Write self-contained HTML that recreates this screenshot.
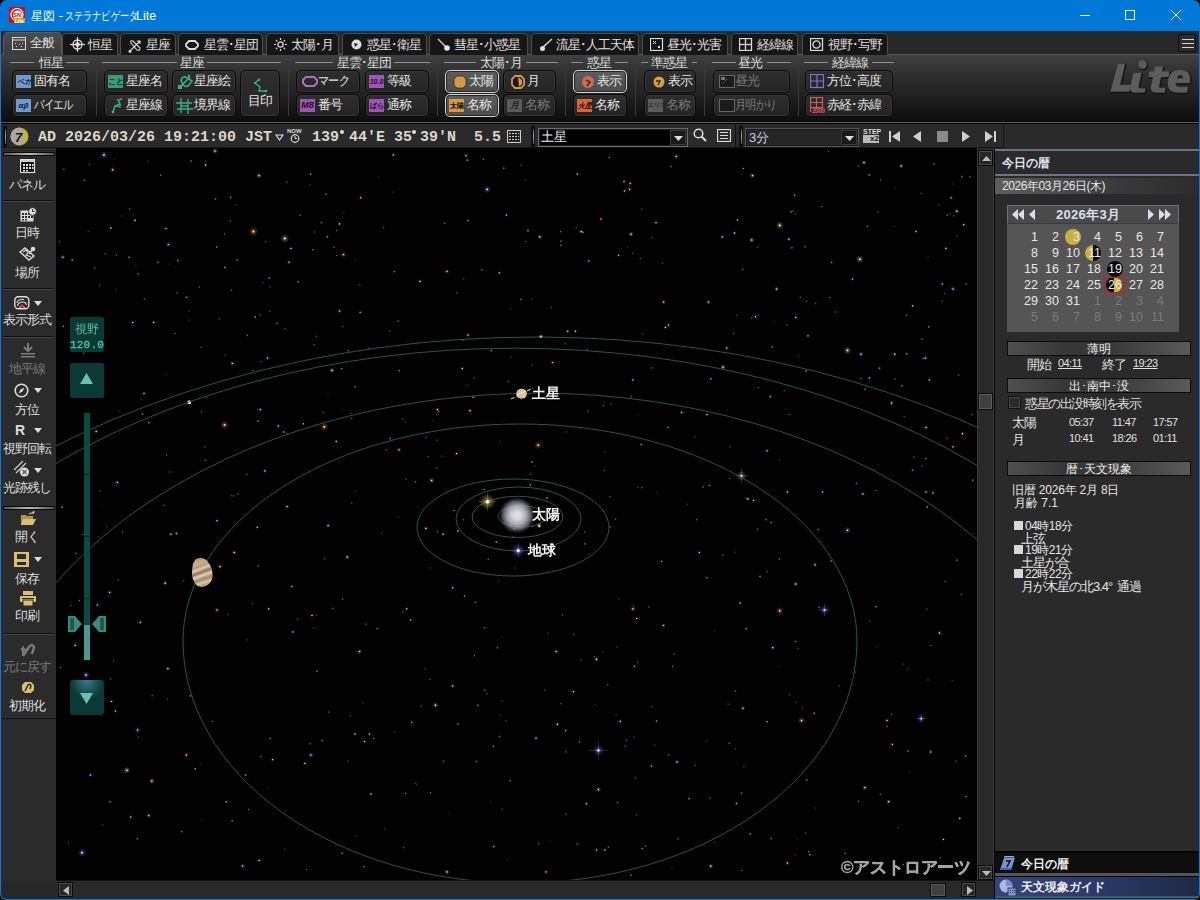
<!DOCTYPE html>
<html><head><meta charset="utf-8">
<style>
*{box-sizing:border-box;margin:0;padding:0}
html,body{width:1200px;height:900px;overflow:hidden;background:#000}
body{position:relative;font-family:"Liberation Sans",sans-serif;color:#ddd;font-size:13px}
.a{position:absolute}
#title{left:0;top:0;width:1200px;height:31px;background:#0078d7;border-radius:7px 7px 0 0}
#frame{left:0;top:31px;width:1200px;height:869px;background:#282828;border:1px solid #0c7ad6;border-top:none;border-radius:0 0 6px 6px}
.tab{top:33px;height:22px;background:#161616;border:1px solid #4c4c4c;border-bottom:none;border-radius:5px 5px 0 0;color:#e0e0e0;font-size:13px;line-height:12px;letter-spacing:-1px;white-space:nowrap}
.tab span{top:5px!important}
.tab.on span{top:4px!important}
.tab.on{top:32px;height:23px;background:linear-gradient(#4c4c4c,#3c3c3c);border-color:#5c5c5c}
#ribbon{left:1px;top:54px;width:1198px;height:69px;background:linear-gradient(#404040,#2e2e2e 30%,#1e1e1e 65%,#0c0c0c);border-top:1px solid #5a5a5a}
.glab{top:57px;height:12px;font-size:13px;line-height:12px;letter-spacing:-1px;color:#dcdcdc;text-align:center;white-space:nowrap}
.gl{height:1px;background:#8b9097;top:62px}
.vsep{top:70px;width:1px;height:46px;background:#0c0c0c;border-right:1px solid #3a3a3a}
.btn{height:23px;border:1px solid #0a0a0a;border-radius:5px;background:linear-gradient(#2e2e2e,#242424);box-shadow:inset 0 0 0 1px #343434;color:#e4e4e4;font-size:13px;line-height:12px;letter-spacing:-1px;white-space:nowrap}
.btn>span{top:4px!important}
.btn.on{border:1px solid #d4d4d4;background:linear-gradient(#5e5e5e,#4c4c4c);box-shadow:inset 0 0 0 1px #262626}
.btn.dis{color:#7a7a7a}
.ic{position:absolute;top:4px}
#status{left:1px;top:123px;width:1198px;height:25px;background:#2a2a2a;border-top:1px solid #050505}
#side{left:1px;top:148px;width:55px;height:733px;background:#2b2b2b}
#sky{left:56px;top:148px;width:921px;height:732px;background:#030303;overflow:hidden}
#vscroll{left:977px;top:148px;width:18px;height:732px;background:#2a2a2a;border-left:1px solid #111}
#hscroll{left:56px;top:880px;width:939px;height:18px;background:#2a2a2a;border-top:1px solid #111}
#rpanel{left:995px;top:148px;width:204px;height:751px;background:#2a2a2a}
.mono{font-family:"Liberation Mono",monospace}
</style></head><body>
<div id="title" class="a"></div>
<svg class="a" style="left:9px;top:7px" width="16" height="16"><rect width="16" height="16" fill="#d40c0c"/><circle cx="8" cy="7.5" r="6" fill="none" stroke="#fff" stroke-width="1.2"/><circle cx="8.5" cy="8" r="4.5" fill="#fff"/><text x="4.3" y="10" font-size="5.5" font-weight="bold" fill="#a01010" font-family="Liberation Sans">SN</text><rect x="5" y="11" width="11" height="5" fill="#e8962a"/><text x="6" y="15.6" font-size="5" font-weight="bold" fill="#fff" font-family="Liberation Sans">Lite</text></svg>
<div class="a" style="left:31px;top:10px;font-size:12px;line-height:12px;color:#fff;white-space:nowrap">星図</div><div class="a" style="left:59px;top:16px;width:4px;height:1px;background:#fff"></div><div class="a" style="left:65px;top:10px;font-size:12px;line-height:12px;color:#fff;white-space:nowrap;transform:scaleX(0.76);transform-origin:0 0">ステラナビゲータ</div><div class="a" style="left:136px;top:10px;font-size:12.5px;line-height:12px;color:#fff;white-space:nowrap">Lite</div>
<div class="a" style="left:1080px;top:15px;width:10px;height:1px;background:#fff"></div>
<div class="a" style="left:1125px;top:10px;width:10px;height:10px;border:1px solid #fff"></div>
<svg class="a" style="left:1170px;top:9px" width="12" height="12"><path d="M1 1 L11 11 M11 1 L1 11" stroke="#fff" stroke-width="1"/></svg>

<div id="frame" class="a"></div>
<div id="ribbon" class="a"></div>
<div class="a tab on" style="left:3px;width:59px"><svg class="a" style="left:8px;top:4px" width="14" height="13"><rect x="0.5" y="0.5" width="13" height="12" fill="none" stroke="#d8d8d8"/><line x1="0" y1="3" x2="14" y2="3" stroke="#d8d8d8"/><rect x="3" y="6" width="1" height="1" fill="#ddd"/><rect x="7" y="7" width="1" height="1" fill="#ddd"/><rect x="10" y="6" width="1" height="1" fill="#ddd"/><rect x="4" y="9" width="1" height="1" fill="#ddd"/><rect x="9" y="9" width="1" height="1" fill="#ddd"/></svg><span class="a" style="left:26px;top:0">全般</span></div>
<div class="a tab" style="left:62px;width:56px"><svg class="a" style="left:7px;top:3px" width="15" height="15"><circle cx="7.5" cy="7.5" r="4.5" fill="none" stroke="#e0e0e0" stroke-width="1.3"/><circle cx="7.5" cy="7.5" r="2.3" fill="#e8e8e8"/><line x1="7.5" y1="0" x2="7.5" y2="15" stroke="#e0e0e0" stroke-width="1.2"/><line x1="0" y1="7.5" x2="15" y2="7.5" stroke="#e0e0e0" stroke-width="1.2"/></svg><span class="a" style="left:25px;top:0">恒星</span></div>
<div class="a tab" style="left:120px;width:56px"><svg class="a" style="left:7px;top:5px" width="15" height="15"><path d="M1 13 L12 2 M9 2 H12 V5" fill="none" stroke="#ddd" stroke-width="1.1"/><path d="M3 4 Q2 1 5 2 L12 9 Q12 12 9 11 Z" fill="none" stroke="#ddd" stroke-width="1.1"/><circle cx="2" cy="12.5" r="1.4" fill="#ddd"/></svg><span class="a" style="left:25px;top:0">星座</span></div>
<div class="a tab" style="left:178px;width:85px"><svg class="a" style="left:6px;top:6px" width="14" height="10"><path d="M4 1 H10 L13 4 V6 L10 9 H4 L1 6 V4 Z" fill="none" stroke="#e0e0e0" stroke-width="1.8"/></svg><span class="a" style="left:25px;top:0">星雲･星団</span></div>
<div class="a tab" style="left:266px;width:73px"><svg class="a" style="left:7px;top:4px" width="13" height="13"><circle cx="6.5" cy="6.5" r="2.6" fill="none" stroke="#ddd" stroke-width="1.3"/><g stroke="#ddd" stroke-width="1.2"><line x1="6.5" y1="0" x2="6.5" y2="2"/><line x1="6.5" y1="11" x2="6.5" y2="13"/><line x1="0" y1="6.5" x2="2" y2="6.5"/><line x1="11" y1="6.5" x2="13" y2="6.5"/><line x1="2" y1="2" x2="3.3" y2="3.3"/><line x1="9.7" y1="9.7" x2="11" y2="11"/><line x1="2" y1="11" x2="3.3" y2="9.7"/><line x1="9.7" y1="3.3" x2="11" y2="2"/></g></svg><span class="a" style="left:24px;top:0">太陽･月</span></div>
<div class="a tab" style="left:342px;width:85px"><svg class="a" style="left:8px;top:5px" width="12" height="12"><circle cx="5.5" cy="5.5" r="5" fill="#ddd"/><path d="M3 4 L7 5 L4 8" fill="#222"/></svg><span class="a" style="left:24px;top:0">惑星･衛星</span></div>
<div class="a tab" style="left:429px;width:99px"><svg class="a" style="left:7px;top:4px" width="14" height="14"><line x1="1" y1="1" x2="9" y2="9" stroke="#ccc" stroke-width="1.5"/><circle cx="10" cy="10" r="2.8" fill="#e8e8e8"/></svg><span class="a" style="left:24px;top:0">彗星･小惑星</span></div>
<div class="a tab" style="left:531px;width:108px"><svg class="a" style="left:7px;top:4px" width="14" height="14"><path d="M13 1 L4 9" stroke="#ccc" stroke-width="1.5"/><path d="M11 3 L3 11" stroke="#ccc" stroke-width="1"/><circle cx="3.5" cy="10.5" r="2.5" fill="#e0e0e0"/></svg><span class="a" style="left:24px;top:0">流星･人工天体</span></div>
<div class="a tab" style="left:642px;width:86px"><svg class="a" style="left:7px;top:4px" width="14" height="13"><rect x="0.5" y="0.5" width="12" height="12" fill="none" stroke="#ddd" stroke-width="1.2"/><path d="M3 3 L6 6 M6 3 L3 6" stroke="#ddd"/><rect x="8" y="8" width="2" height="2" fill="#ddd"/></svg><span class="a" style="left:24px;top:0">昼光･光害</span></div>
<div class="a tab" style="left:731px;width:67px"><svg class="a" style="left:7px;top:4px" width="14" height="13"><rect x="0.5" y="0.5" width="12" height="12" fill="none" stroke="#ddd" stroke-width="1.3"/><line x1="6.5" y1="0" x2="6.5" y2="13" stroke="#ddd" stroke-width="1.3"/><line x1="0" y1="6.5" x2="13" y2="6.5" stroke="#ddd" stroke-width="1.3"/></svg><span class="a" style="left:25px;top:0">経緯線</span></div>
<div class="a tab" style="left:802px;width:86px"><svg class="a" style="left:7px;top:4px" width="14" height="13"><rect x="0.5" y="0.5" width="12" height="12" fill="none" stroke="#ddd" stroke-width="1.3"/><circle cx="6.5" cy="6.5" r="3.6" fill="none" stroke="#ddd" stroke-width="1.3"/></svg><span class="a" style="left:25px;top:0">視野･写野</span></div>
<div class="a" style="left:1178px;top:34px;width:18px;height:18px;background:#2c2c2c;border:1.5px solid #0e0e0e;border-radius:2px"><div class="a" style="left:2.5px;top:3.5px;width:12px;height:1.6px;background:#d4d4d4"></div><div class="a" style="left:2.5px;top:7.5px;width:12px;height:1.6px;background:#d4d4d4"></div><div class="a" style="left:2.5px;top:11.5px;width:12px;height:1.6px;background:#d4d4d4"></div></div>
<!--RIBBON-->
<div class="a gl" style="left:10px;width:24px"></div><div class="a glab" style="left:39px">恒星</div><div class="a gl" style="left:66px;width:23px"></div>
<div class="a gl" style="left:102px;width:75px"></div><div class="a glab" style="left:180px">星座</div><div class="a gl" style="left:207px;width:74px"></div>
<div class="a gl" style="left:295px;width:38px"></div><div class="a glab" style="left:337px">星雲･星団</div><div class="a gl" style="left:394px;width:36px"></div>
<div class="a gl" style="left:444px;width:32px"></div><div class="a glab" style="left:480px">太陽･月</div><div class="a gl" style="left:526px;width:32px"></div>
<div class="a gl" style="left:571px;width:12px"></div><div class="a glab" style="left:587px">惑星</div><div class="a gl" style="left:615px;width:13px"></div>
<div class="a gl" style="left:641px;width:7px"></div><div class="a glab" style="left:651px">準惑星</div><div class="a gl" style="left:692px;width:5px"></div>
<div class="a gl" style="left:712px;width:24px"></div><div class="a glab" style="left:738px">昼光</div><div class="a gl" style="left:767px;width:24px"></div>
<div class="a gl" style="left:804px;width:24px"></div><div class="a glab" style="left:832px">経緯線</div><div class="a gl" style="left:872px;width:22px"></div>
<div class="a vsep" style="left:96px"></div>
<div class="a vsep" style="left:288px"></div>
<div class="a vsep" style="left:437px"></div>
<div class="a vsep" style="left:565px"></div>
<div class="a vsep" style="left:635px"></div>
<div class="a vsep" style="left:704px"></div>
<div class="a vsep" style="left:798px"></div>
<div class="a btn " style="left:12px;top:70px;width:75px"><div class="ic" style="left:3px;top:4px;background:#6d9ccc;width:15px;height:13px;font-size:7px;line-height:13px;letter-spacing:0;text-align:center;color:#102040;font-weight:bold;font-style:italic;">ベガ</div><span class="a" style="left:21px;top:0">固有名</span></div>
<div class="a btn " style="left:12px;top:94px;width:75px"><div class="ic" style="left:3px;top:4px;background:#6d9ccc;width:15px;height:13px;font-size:8px;line-height:13px;letter-spacing:0;text-align:center;color:#102040;font-weight:bold;font-style:italic;">αβ</div><span class="a" style="left:21px;top:0;transform:scaleX(0.8);transform-origin:0 0">バイエル</span></div>
<div class="a btn " style="left:104px;top:70px;width:64px"><div class="ic" style="left:3px;top:4px;background:#3a9c74;width:15px;height:13px;font-size:8px;line-height:13px;letter-spacing:0;text-align:center;color:#0a2a1a;font-weight:bold;">こと</div><span class="a" style="left:21px;top:0">星座名</span></div>
<div class="a btn " style="left:104px;top:94px;width:64px"><svg class="ic" style="left:6px;top:3px" width="14" height="16"><path d="M2 14 L4 8 L9 6 L7 2 L11 1" fill="none" stroke="#3fae86" stroke-width="1.5"/><path d="M4 8 L9 9 L9 6" fill="none" stroke="#3fae86" stroke-width="1.2"/><circle cx="2" cy="14" r="1.4" fill="#3fae86"/></svg><span class="a" style="left:21px;top:0">星座線</span></div>
<div class="a btn " style="left:172px;top:70px;width:64px"><svg class="ic" style="left:4px;top:3px" width="17" height="16"><path d="M2 14 L13 3 M4 6 Q6 1 10 4 L15 7 L11 12 Q8 13 6 11 Z" fill="none" stroke="#3fae86" stroke-width="1.6"/><rect x="1" y="11" width="4" height="4" fill="#3fae86"/><circle cx="12" cy="2" r="1.3" fill="#3fae86"/></svg><span class="a" style="left:21px;top:0">星座絵</span></div>
<div class="a btn " style="left:172px;top:94px;width:64px"><svg class="ic" style="left:3px;top:3px" width="17" height="16"><path d="M0 5 H16 M1 11 H17 M5 0 V15 M12 1 V16 M5 8 H12" stroke="#3fae86" stroke-width="1.3" fill="none"/></svg><span class="a" style="left:21px;top:0">境界線</span></div>
<div class="a btn " style="left:296px;top:70px;width:64px"><svg class="ic" style="left:5px;top:5px" width="16" height="11"><path d="M4 1 H12 L15 4 V7 L12 10 H4 L1 7 V4 Z" fill="none" stroke="#b070c0" stroke-width="2"/></svg><span class="a" style="left:21px;top:0;transform:scaleX(0.86);transform-origin:0 0">マーク</span></div>
<div class="a btn " style="left:296px;top:94px;width:64px"><div class="ic" style="left:3px;top:4px;background:#9a58b0;width:15px;height:13px;font-size:9px;line-height:13px;letter-spacing:0;text-align:center;color:#2a0a30;font-weight:bold;font-style:italic;">M8</div><span class="a" style="left:21px;top:0">番号</span></div>
<div class="a btn " style="left:365px;top:70px;width:64px"><div class="ic" style="left:3px;top:4px;background:#9a58b0;width:15px;height:13px;font-size:7px;line-height:13px;letter-spacing:0;text-align:center;color:#2a0a30;font-weight:bold;font-style:italic;">10.0</div><span class="a" style="left:21px;top:0">等級</span></div>
<div class="a btn " style="left:365px;top:94px;width:64px"><div class="ic" style="left:3px;top:4px;background:#9a58b0;width:15px;height:13px;font-size:7px;line-height:13px;letter-spacing:0;text-align:center;color:#2a0a30;font-weight:bold;">ばら</div><span class="a" style="left:21px;top:0">通称</span></div>
<div class="a btn on" style="left:445px;top:70px;width:54px"><svg class="ic" style="left:7px;top:4px" width="14" height="14"><path d="M4 1 H10 L13 4 V10 L10 13 H4 L1 10 V4 Z" fill="#d49a4a" stroke="#111" stroke-width="0.6"/></svg><span class="a" style="left:23px;top:0">太陽</span></div>
<div class="a btn on" style="left:445px;top:94px;width:54px"><div class="ic" style="left:3px;top:4px;background:#d49a4a;width:15px;height:13px;font-size:7px;line-height:13px;letter-spacing:0;text-align:center;color:#111;font-weight:bold;">太陽</div><span class="a" style="left:21px;top:0">名称</span></div>
<div class="a btn " style="left:503px;top:70px;width:53px"><svg class="ic" style="left:7px;top:4px" width="14" height="14"><path d="M4 1 H10 L13 4 V10 L10 13 H4 L1 10 V4 Z" fill="#1a1a1a" stroke="#d49a4a" stroke-width="1.8"/><path d="M7 2 L11 5 V9 L8 12 Z" fill="#d49a4a"/></svg><span class="a" style="left:23px;top:0">月</span></div>
<div class="a btn dis" style="left:503px;top:94px;width:53px"><div class="ic" style="left:3px;top:4px;background:#5a5a5a;width:15px;height:13px;font-size:9px;line-height:13px;letter-spacing:0;text-align:center;color:#222;font-weight:bold;font-style:italic;">月</div><span class="a" style="left:21px;top:0">名称</span></div>
<div class="a btn on" style="left:573px;top:70px;width:54px"><svg class="ic" style="left:7px;top:4px" width="14" height="14"><circle cx="7" cy="7" r="6" fill="#d06a4a"/><path d="M5 5 L9 7 L6 11" stroke="#222" stroke-width="1.3" fill="none"/></svg><span class="a" style="left:23px;top:0">表示</span></div>
<div class="a btn " style="left:573px;top:94px;width:54px"><div class="ic" style="left:3px;top:4px;background:#d8643e;width:15px;height:13px;font-size:7px;line-height:13px;letter-spacing:0;text-align:center;color:#2a0a00;font-weight:bold;font-style:italic;">火星</div><span class="a" style="left:21px;top:0">名称</span></div>
<div class="a btn " style="left:644px;top:70px;width:52px"><svg class="ic" style="left:7px;top:4px" width="14" height="14"><circle cx="7" cy="7" r="5.5" fill="#d4a040"/><path d="M4 6 L8 6 L6 10" stroke="#222" stroke-width="1.3" fill="none"/></svg><span class="a" style="left:23px;top:0">表示</span></div>
<div class="a btn dis" style="left:644px;top:94px;width:52px"><div class="ic" style="left:3px;top:4px;background:#5c5c5c;width:15px;height:13px;font-size:6px;line-height:13px;letter-spacing:0;text-align:center;color:#2a2a2a;font-weight:bold;">エリス</div><span class="a" style="left:21px;top:0">名称</span></div>
<div class="a btn dis" style="left:713px;top:70px;width:77px"><svg class="ic" style="left:5px;top:4px" width="16" height="14"><rect x="0.5" y="0.5" width="15" height="12" fill="#1c1c1c" stroke="#666" stroke-width="1"/><path d="M2 2 H6 V5 H2Z" fill="#777"/><path d="M6 6 L8 4 M4 7 L5 8" stroke="#666"/></svg><span class="a" style="left:21px;top:0">昼光</span></div>
<div class="a btn dis" style="left:713px;top:94px;width:77px"><svg class="ic" style="left:5px;top:4px" width="16" height="14"><rect x="0.5" y="0.5" width="15" height="12" fill="#1c1c1c" stroke="#666" stroke-width="1"/><path d="M9 3 A3.5 3.5 0 1 1 5 9 A3 3 0 0 0 9 3Z" fill="#777"/></svg><span class="a" style="left:21px;top:0;transform:scaleX(0.86);transform-origin:0 0">月明かり</span></div>
<div class="a btn " style="left:805px;top:70px;width:88px"><svg class="ic" style="left:4px;top:3px" width="14" height="15"><rect x="0.5" y="0.5" width="13" height="13" fill="none" stroke="#7878d0" stroke-width="1.2"/><path d="M7 0.5 V13.5 M0.5 7 H13.5" stroke="#7878d0" stroke-width="1.2"/></svg><span class="a" style="left:21px;top:0">方位･高度</span></div>
<div class="a btn " style="left:805px;top:94px;width:88px"><svg class="ic" style="left:4px;top:2px" width="16" height="17"><rect x="0.5" y="0.5" width="12" height="10" fill="none" stroke="#c86060" stroke-width="1.2"/><path d="M6.5 0.5 V10.5 M0.5 5.5 H12.5 M0.5 10 V15" stroke="#c86060" stroke-width="1.2"/><text x="2" y="16" font-size="6.5" fill="#e05858" font-family="Liberation Sans" font-weight="bold" letter-spacing="-0.5">2000</text></svg><span class="a" style="left:21px;top:0">赤経･赤緯</span></div>
<div class="a btn" style="left:240px;top:70px;width:40px;height:47px"><svg class="a" style="left:12px;top:7px" width="16" height="16"><path d="M6 1.5 L2 5 L7 9 L6 13 L13 13" fill="none" stroke="#3fae86" stroke-width="1.3"/><circle cx="6" cy="1.8" r="1.3" fill="#3fae86"/><circle cx="2" cy="5" r="1.1" fill="#3fae86"/><circle cx="13" cy="13" r="1.3" fill="#3fae86"/></svg><div class="a" style="left:7px;top:24px;line-height:12px">目印</div></div>
<svg class="a" style="left:1100px;top:56px" width="98" height="42" viewBox="1100 56 98 42"><g transform="translate(0.8,0.8)" fill="#151515" stroke="#151515" stroke-width="1.8" stroke-linejoin="round"><path d="M1118 64 L1125 64 L1120 85 L1131 85 L1129.5 91.5 L1110.5 91.5 Z"/><circle cx="1142.5" cy="64.5" r="4.2"/><path d="M1133.5 73 L1141.5 73 L1138.5 86 Q1138 88.5 1141 88.5 L1145.5 88.5 L1144.5 92.5 L1135 92.5 Q1129.5 92.5 1130.5 86.5 Z"/><path d="M1155 66.5 L1163 66.5 L1162 71.5 L1169.5 71.5 L1168.5 77 L1161 77 L1159 86 Q1158.5 88 1161 88 L1165.5 88 L1164.5 92.5 L1156 92.5 Q1150 92.5 1151 87 L1153 77 L1148.5 77 L1149.5 71.5 L1154 71.5 Z"/><path d="M1180 70 Q1191 70 1190 80 L1189.5 83 L1175.5 83 Q1175.5 87 1180 87 L1188 87 L1187 92.5 L1178 92.5 Q1167 92.5 1168 82 Q1169 70 1180 70 Z M1177 78.5 L1183 78.5 Q1183.5 75 1180.5 75 Q1177.5 75 1177 78.5 Z" fill-rule="evenodd"/></g><g fill="#5c5c5c" stroke="#5c5c5c" stroke-width="0.3" stroke-linejoin="round"><path d="M1118 64 L1125 64 L1120 85 L1131 85 L1129.5 91.5 L1110.5 91.5 Z"/><circle cx="1142.5" cy="64.5" r="4.2"/><path d="M1133.5 73 L1141.5 73 L1138.5 86 Q1138 88.5 1141 88.5 L1145.5 88.5 L1144.5 92.5 L1135 92.5 Q1129.5 92.5 1130.5 86.5 Z"/><path d="M1155 66.5 L1163 66.5 L1162 71.5 L1169.5 71.5 L1168.5 77 L1161 77 L1159 86 Q1158.5 88 1161 88 L1165.5 88 L1164.5 92.5 L1156 92.5 Q1150 92.5 1151 87 L1153 77 L1148.5 77 L1149.5 71.5 L1154 71.5 Z"/><path d="M1180 70 Q1191 70 1190 80 L1189.5 83 L1175.5 83 Q1175.5 87 1180 87 L1188 87 L1187 92.5 L1178 92.5 Q1167 92.5 1168 82 Q1169 70 1180 70 Z M1177 78.5 L1183 78.5 Q1183.5 75 1180.5 75 Q1177.5 75 1177 78.5 Z" fill-rule="evenodd"/></g></svg>
<!--/RIBBON-->
<div id="status" class="a"></div>
<!--STATUS-->
<div class="a" style="left:1px;top:122px;width:1198px;height:1px;background:#5a5a5a"></div>
<div class="a" style="left:3px;top:126px;width:4px;height:21px;background:#0c0c0c;border:1px solid #111"><div class="a" style="left:1px;top:2px;width:1px;height:15px;background:linear-gradient(#555,#aaa 50%,#555)"></div></div>
<svg class="a" style="left:10px;top:127px" width="19" height="19"><circle cx="9.5" cy="9.5" r="9" fill="#c8b040"/><path d="M9.5 0.5 A9 9 0 0 0 9.5 18.5 A3.5 9 0 0 0 9.5 0.5Z" fill="#a8a8a8"/><text x="5" y="15" font-size="13" font-weight="bold" font-style="italic" fill="#151515" font-family="Liberation Sans">7</text></svg>
<div class="a mono" style="left:38px;top:128px;font-size:15px;line-height:20px;font-weight:bold;color:#dcd6cc;white-space:pre">AD 2026/03/26 19:21:00 JST</div>
<svg class="a" style="left:275px;top:134px" width="9" height="7"><path d="M1 1 H8 L4.5 6 Z" fill="none" stroke="#ddd" stroke-width="1.2"/></svg>
<div class="a" style="left:287px;top:128px;font-size:6px;line-height:6px;font-weight:bold;color:#ddd;letter-spacing:0px">NOW</div><svg class="a" style="left:289px;top:134px" width="12" height="9"><circle cx="6" cy="4.5" r="3.8" fill="none" stroke="#ddd" stroke-width="1.2"/><path d="M6 2 V4.5 H8" stroke="#ddd" fill="none"/></svg>
<div class="a mono" style="left:312px;top:128px;font-size:15px;line-height:20px;font-weight:bold;color:#dcd6cc;white-space:pre">139</div>
<div class="a" style="left:340px;top:130px;width:4px;height:4px;border-radius:50%;background:#e0e0e0"></div>
<div class="a mono" style="left:349px;top:128px;font-size:15px;line-height:20px;font-weight:bold;color:#dcd6cc;white-space:pre">44'E</div>
<div class="a mono" style="left:394px;top:128px;font-size:15px;line-height:20px;font-weight:bold;color:#dcd6cc;white-space:pre">35</div>
<div class="a" style="left:412px;top:130px;width:4px;height:4px;border-radius:50%;background:#e0e0e0"></div>
<div class="a mono" style="left:420px;top:128px;font-size:15px;line-height:20px;font-weight:bold;color:#dcd6cc;white-space:pre">39'N</div>
<div class="a mono" style="left:474px;top:128px;font-size:15px;line-height:20px;font-weight:bold;color:#dcd6cc;white-space:pre">5.5</div>
<svg class="a" style="left:507px;top:130px" width="14" height="13"><rect x="0.5" y="0.5" width="13" height="12" fill="none" stroke="#ccc"/><g fill="#ccc"><rect x="2" y="3" width="10" height="1"/><rect x="2" y="6" width="10" height="1"/><rect x="2" y="9" width="10" height="1"/></g><g fill="#111"><rect x="4" y="2" width="1" height="9"/><rect x="7" y="2" width="1" height="9"/><rect x="10" y="2" width="1" height="9"/></g></svg>
<div class="a" style="left:531px;top:126px;width:4px;height:21px;background:#0c0c0c;border:1px solid #111"><div class="a" style="left:1px;top:2px;width:1px;height:15px;background:linear-gradient(#555,#aaa 50%,#555)"></div></div>
<div class="a" style="left:538px;top:128px;width:150px;height:19px;background:#000;border:1px solid #6a6a6a;box-shadow:inset 0 0 0 1px #222"><div class="a" style="left:2px;top:0px;font-size:13px;line-height:15px;color:#eee">土星</div><div class="a" style="left:131px;top:1px;width:16px;height:15px;background:#1a1a1a;border:1px solid #3a3a3a"><svg class="a" style="left:3px;top:5px" width="9" height="5"><path d="M0 0 H9 L4.5 5Z" fill="#ddd"/></svg></div></div>
<svg class="a" style="left:693px;top:128px" width="14" height="15"><circle cx="5.5" cy="5.5" r="4.3" fill="none" stroke="#ddd" stroke-width="1.5"/><path d="M8.5 8.5 L13 13" stroke="#ddd" stroke-width="2"/></svg>
<svg class="a" style="left:717px;top:129px" width="14" height="13"><rect x="0.5" y="0.5" width="13" height="12" fill="none" stroke="#ddd" stroke-width="1.2"/><g fill="#ddd"><rect x="3" y="3" width="8" height="1"/><rect x="3" y="6" width="8" height="1"/><rect x="3" y="9" width="8" height="1"/></g></svg>
<div class="a" style="left:735px;top:123px;width:1px;height:25px;background:#111"></div>
<div class="a" style="left:739px;top:126px;width:4px;height:21px;background:#0c0c0c;border:1px solid #111"><div class="a" style="left:1px;top:2px;width:1px;height:15px;background:linear-gradient(#555,#aaa 50%,#555)"></div></div>
<div class="a" style="left:745px;top:128px;width:114px;height:19px;background:#262626;border:1px solid #555;box-shadow:inset 0 0 0 1px #1a1a1a"><div class="a" style="left:3px;top:1px;font-size:13px;line-height:15px;color:#c8cce0">3分</div><div class="a" style="left:95px;top:1px;width:16px;height:15px;background:#1a1a1a;border:1px solid #3a3a3a"><svg class="a" style="left:3px;top:5px" width="9" height="5"><path d="M0 0 H9 L4.5 5Z" fill="#ddd"/></svg></div></div>
<div class="a" style="left:863px;top:128px;font-size:7px;line-height:7px;font-weight:bold;color:#ddd">STEP</div><div class="a" style="left:863px;top:135px;width:16px;height:8px;background:#bbb;font-size:8px;line-height:8px;color:#111;text-align:right;font-weight:bold">x2</div>
<svg class="a" style="left:889px;top:131px" width="12" height="11"><rect x="0" y="0" width="2" height="11" fill="#cfcfcf"/><path d="M11 0 V11 L3 5.5Z" fill="#cfcfcf"/></svg>
<svg class="a" style="left:913px;top:131px" width="8" height="11"><path d="M8 0 V11 L0 5.5Z" fill="#cfcfcf"/></svg>
<div class="a" style="left:937px;top:131px;width:11px;height:11px;background:#8a8a8a"></div>
<svg class="a" style="left:962px;top:131px" width="8" height="11"><path d="M0 0 V11 L8 5.5Z" fill="#cfcfcf"/></svg>
<svg class="a" style="left:985px;top:131px" width="12" height="11"><path d="M0 0 V11 L8 5.5Z" fill="#cfcfcf"/><rect x="9" y="0" width="2" height="11" fill="#cfcfcf"/></svg>
<div class="a" style="left:1003px;top:123px;width:1px;height:25px;background:#151515"></div>
<div class="a" style="left:1px;top:147px;width:1002px;height:1px;background:#151515"></div>
<!--/STATUS-->
<div id="side" class="a"></div>
<!--SIDE-->
<div class="a" style="left:3px;top:152px;width:52px;height:4px;background:#0a0a0a"><div class="a" style="left:1px;top:1px;width:50px;height:2px;background:linear-gradient(90deg,#555,#bbb 50%,#555)"></div></div>
<svg class="a" style="left:20px;top:159px" width="16" height="15"><rect x="0.5" y="0.5" width="14" height="13" fill="#111" stroke="#ddd" stroke-width="1.2"/><rect x="1" y="1" width="14" height="2" fill="#ccc"/><g fill="#ddd"><rect x="3" y="5" width="2" height="2"/><rect x="6" y="5" width="2" height="2"/><rect x="9" y="5" width="2" height="2"/><rect x="12" y="5" width="1.5" height="2"/><rect x="3" y="8" width="2" height="2"/><rect x="6" y="8" width="2" height="2"/><rect x="9" y="8" width="2" height="2"/><rect x="12" y="8" width="1.5" height="2"/><rect x="3" y="11" width="2" height="1.5"/><rect x="6" y="11" width="2" height="1.5"/></g></svg>
<div class="a" style="left:0px;top:179px;width:55px;text-align:center;font-size:13px;line-height:12px;letter-spacing:-1px;text-indent:-1px;color:#dedede;white-space:nowrap">パネル</div>
<div class="a" style="left:3px;top:200px;width:51px;height:1px;background:#0e0e0e"></div><div class="a" style="left:3px;top:201px;width:51px;height:1px;background:#474747"></div>
<svg class="a" style="left:20px;top:207px" width="17" height="15"><rect x="0.5" y="3.5" width="13" height="11" fill="#ddd"/><g fill="#2b2b2b"><rect x="2" y="6" width="2" height="2"/><rect x="5" y="6" width="2" height="2"/><rect x="8" y="6" width="2" height="2"/><rect x="2" y="9" width="2" height="2"/><rect x="5" y="9" width="2" height="2"/><rect x="8" y="9" width="2" height="2"/><rect x="11" y="9" width="2" height="2"/><rect x="2" y="12" width="2" height="1.5"/><rect x="5" y="12" width="2" height="1.5"/></g><circle cx="12.5" cy="4.5" r="4" fill="#ddd" stroke="#2b2b2b"/><path d="M12.5 2 V4.5 H14.5" stroke="#2b2b2b" fill="none"/></svg>
<div class="a" style="left:0px;top:227px;width:55px;text-align:center;font-size:13px;line-height:12px;letter-spacing:-1px;text-indent:-1px;color:#dedede;white-space:nowrap">日時</div>
<svg class="a" style="left:19px;top:246px" width="18" height="16"><path d="M1 6 L6 2 L15 10 L10 14 Z" fill="#2b2b2b" stroke="#ddd" stroke-width="1.4"/><path d="M4 6 L7 4 L9 7 L7 9 L12 11" stroke="#ddd" fill="none" stroke-width="1.1"/><circle cx="14" cy="3" r="2.3" fill="#ddd"/><path d="M14 3 L10 8" stroke="#ddd" stroke-width="1.4"/></svg>
<div class="a" style="left:0px;top:267px;width:55px;text-align:center;font-size:13px;line-height:12px;letter-spacing:-1px;text-indent:-1px;color:#dedede;white-space:nowrap">場所</div>
<div class="a" style="left:3px;top:288px;width:51px;height:1px;background:#0e0e0e"></div><div class="a" style="left:3px;top:289px;width:51px;height:1px;background:#474747"></div>
<svg class="a" style="left:14px;top:296px" width="16" height="14"><rect x="0.8" y="0.8" width="14" height="12" rx="3.5" fill="none" stroke="#ddd" stroke-width="1.4"/><path d="M3 7 Q3 3 10 3.5" stroke="#ddd" fill="none" stroke-width="1.1"/><path d="M3.5 10 Q4 6 9 6 Q12 6 12.5 9" stroke="#ddd" fill="none" stroke-width="1.1"/><path d="M5 11.5 Q8 8.5 11 11.5" stroke="#ddd" fill="none"/><circle cx="8" cy="10" r="1.7" fill="#e03030"/></svg>
<svg class="a" style="left:34px;top:301px" width="8" height="5"><path d="M0 0 H8 L4 5Z" fill="#dedede"/></svg>
<div class="a" style="left:0px;top:314px;width:55px;text-align:center;font-size:13px;line-height:12px;letter-spacing:-1px;text-indent:-1px;color:#dedede;white-space:nowrap">表示形式</div>
<div class="a" style="left:3px;top:336px;width:51px;height:1px;background:#0e0e0e"></div><div class="a" style="left:3px;top:337px;width:51px;height:1px;background:#474747"></div>
<svg class="a" style="left:20px;top:343px" width="16" height="15"><path d="M8 0 V7 M4 4 L8 8 L12 4" stroke="#7a7a7a" stroke-width="2" fill="none"/><rect x="1" y="10" width="14" height="1.5" fill="#7a7a7a"/><rect x="1" y="13" width="14" height="1.5" fill="#7a7a7a"/></svg>
<div class="a" style="left:0px;top:363px;width:55px;text-align:center;font-size:13px;line-height:12px;letter-spacing:-1px;text-indent:-1px;color:#7a7a7a;white-space:nowrap">地平線</div>
<svg class="a" style="left:14px;top:383px" width="15" height="15"><circle cx="7.5" cy="7.5" r="6.3" fill="none" stroke="#ddd" stroke-width="1.6"/><path d="M10.5 4.5 L8.5 8.5 L4.5 10.5 L6.5 6.5Z" fill="#ddd"/></svg>
<svg class="a" style="left:34px;top:388px" width="8" height="5"><path d="M0 0 H8 L4 5Z" fill="#dedede"/></svg>
<div class="a" style="left:0px;top:404px;width:55px;text-align:center;font-size:13px;line-height:12px;letter-spacing:-1px;text-indent:-1px;color:#dedede;white-space:nowrap">方位</div>
<div class="a" style="left:15px;top:423px;font-size:14px;line-height:14px;font-weight:bold;color:#ddd">R</div>
<svg class="a" style="left:34px;top:428px" width="8" height="5"><path d="M0 0 H8 L4 5Z" fill="#dedede"/></svg>
<div class="a" style="left:0px;top:443px;width:55px;text-align:center;font-size:13px;line-height:12px;letter-spacing:-1px;text-indent:-1px;color:#dedede;white-space:nowrap">視野回転</div>
<svg class="a" style="left:14px;top:461px" width="16" height="16"><path d="M0 9 L9 0 M2 12 L12 2" stroke="#ccc" stroke-width="1.3"/><circle cx="10.5" cy="11" r="4.5" fill="#ddd"/><path d="M8.5 9 L12.5 13 M12.5 9 L8.5 13" stroke="#555" stroke-width="1.2"/></svg>
<svg class="a" style="left:34px;top:468px" width="8" height="5"><path d="M0 0 H8 L4 5Z" fill="#dedede"/></svg>
<div class="a" style="left:0px;top:482px;width:55px;text-align:center;font-size:13px;line-height:12px;letter-spacing:-1px;text-indent:-1px;color:#dedede;white-space:nowrap">光跡残し</div>
<div class="a" style="left:3px;top:506px;width:52px;height:4px;background:#0a0a0a"><div class="a" style="left:1px;top:1px;width:50px;height:2px;background:linear-gradient(90deg,#555,#bbb 50%,#555)"></div></div>
<svg class="a" style="left:20px;top:511px" width="17" height="16"><path d="M1 4 H6 L7 5 H13 V14 H1Z" fill="#a8944a"/><path d="M3 8 H16 L13 14 H1Z" fill="#d8c070"/><path d="M9 3 L14 1 M13 0 L14 1 L13 3" stroke="#d8c070" stroke-width="1.3" fill="none"/></svg>
<div class="a" style="left:0px;top:531px;width:55px;text-align:center;font-size:13px;line-height:12px;letter-spacing:-1px;text-indent:-1px;color:#dedede;white-space:nowrap">開く</div>
<svg class="a" style="left:14px;top:552px" width="16" height="15"><rect x="0" y="0" width="15" height="15" fill="#d8c070"/><rect x="3" y="2" width="9" height="5" fill="#2b2b2b"/><rect x="3" y="10" width="9" height="3" fill="#2b2b2b"/></svg>
<svg class="a" style="left:34px;top:557px" width="8" height="5"><path d="M0 0 H8 L4 5Z" fill="#dedede"/></svg>
<div class="a" style="left:0px;top:573px;width:55px;text-align:center;font-size:13px;line-height:12px;letter-spacing:-1px;text-indent:-1px;color:#dedede;white-space:nowrap">保存</div>
<svg class="a" style="left:20px;top:591px" width="16" height="15"><rect x="3" y="0" width="10" height="4" fill="#d8c070"/><rect x="0" y="5" width="16" height="6" rx="1" fill="#d8c070"/><rect x="3" y="9" width="10" height="6" fill="#d8c070" stroke="#2b2b2b"/><rect x="2" y="7" width="12" height="1" fill="#2b2b2b"/></svg>
<div class="a" style="left:0px;top:610px;width:55px;text-align:center;font-size:13px;line-height:12px;letter-spacing:-1px;text-indent:-1px;color:#dedede;white-space:nowrap">印刷</div>
<div class="a" style="left:3px;top:633px;width:51px;height:1px;background:#0e0e0e"></div><div class="a" style="left:3px;top:634px;width:51px;height:1px;background:#474747"></div>
<svg class="a" style="left:20px;top:642px" width="16" height="15"><path d="M3 14 L3 6 L1 8 M3 6 L6 9" stroke="#7a7a7a" stroke-width="2" fill="none"/><path d="M3 14 L9 5 Q12 1 14 5 L12 12" stroke="#7a7a7a" stroke-width="2.5" fill="none"/></svg>
<div class="a" style="left:0px;top:661px;width:55px;text-align:center;font-size:13px;line-height:12px;letter-spacing:-1px;text-indent:-1px;color:#7a7a7a;white-space:nowrap">元に戻す</div>
<svg class="a" style="left:21px;top:681px" width="14" height="13"><path d="M4 1 H10 L13 4 V9 L10 12 H4 L1 9 V4 Z" fill="#d8c070"/><path d="M4 10 L7 4 Q9 2 10 5 L9 8" stroke="#222" stroke-width="1.4" fill="none"/></svg>
<div class="a" style="left:0px;top:700px;width:55px;text-align:center;font-size:13px;line-height:12px;letter-spacing:-1px;text-indent:-1px;color:#dedede;white-space:nowrap">初期化</div>
<div class="a" style="left:1px;top:718px;width:55px;height:1px;background:#111"></div>
<div class="a" style="left:56px;top:148px;width:1px;height:732px;background:#161616"></div>
<!--/SIDE-->
<div id="sky" class="a"></div>
<!--SKY-->
<svg class="a" style="left:56px;top:148px" width="921" height="732" viewBox="56 148 921 732">
<defs>
<radialGradient id="sun"><stop offset="0" stop-color="#ffffff"/><stop offset="0.22" stop-color="#f2f2fc"/><stop offset="0.5" stop-color="#c8c8d6" stop-opacity="0.95"/><stop offset="0.72" stop-color="#8a8a98" stop-opacity="0.8"/><stop offset="0.88" stop-color="#404048" stop-opacity="0.45"/><stop offset="1" stop-color="#000" stop-opacity="0"/></radialGradient>
<radialGradient id="gw"><stop offset="0" stop-color="#fff" stop-opacity="0.9"/><stop offset="0.3" stop-color="#fff" stop-opacity="0.35"/><stop offset="1" stop-color="#fff" stop-opacity="0"/></radialGradient>
<radialGradient id="gb"><stop offset="0" stop-color="#d8dcff" stop-opacity="1"/><stop offset="0.3" stop-color="#8890ff" stop-opacity="0.45"/><stop offset="1" stop-color="#4050ff" stop-opacity="0"/></radialGradient>
<radialGradient id="go"><stop offset="0" stop-color="#ffe0c0" stop-opacity="1"/><stop offset="0.3" stop-color="#ff9050" stop-opacity="0.45"/><stop offset="1" stop-color="#ff6020" stop-opacity="0"/></radialGradient>
<radialGradient id="gy"><stop offset="0" stop-color="#fff8d8" stop-opacity="1"/><stop offset="0.3" stop-color="#ffd880" stop-opacity="0.45"/><stop offset="1" stop-color="#ffc040" stop-opacity="0"/></radialGradient>
<radialGradient id="gbtn" cx="0.5" cy="0"><stop offset="0" stop-color="#4a8a98" stop-opacity="0.8"/><stop offset="1" stop-color="#0a3a32" stop-opacity="0"/></radialGradient>
<filter id="bl" x="-5%" y="-5%" width="110%" height="110%"><feGaussianBlur stdDeviation="0.55"/></filter>
<clipPath id="jc"><path d="M196 559 Q203 556 208 562 Q214 570 212 579 Q209 587 201 587 Q193 586 192 574 Q192 562 196 559Z"/></clipPath>
</defs>
<rect x="56" y="148" width="921" height="732" fill="#020202"/>
<g filter="url(#bl)">
<circle cx="355.0" cy="259.8" r="0.81" fill="#8088e0" opacity="0.34"/>
<circle cx="393.3" cy="192.2" r="0.77" fill="#c8c8d0" opacity="0.32"/>
<circle cx="122.1" cy="216.0" r="0.83" fill="#d8c080" opacity="0.33"/>
<circle cx="926.8" cy="609.1" r="0.76" fill="#8088e0" opacity="0.62"/>
<circle cx="953.2" cy="183.9" r="0.66" fill="#8088e0" opacity="0.46"/>
<circle cx="166.0" cy="374.6" r="0.83" fill="#8088e0" opacity="0.36"/>
<circle cx="230.3" cy="220.9" r="0.85" fill="#8088e0" opacity="0.61"/>
<circle cx="513.2" cy="537.1" r="0.97" fill="#d08050" opacity="0.56"/>
<circle cx="389.6" cy="330.9" r="0.70" fill="#8088e0" opacity="0.68"/>
<circle cx="584.7" cy="532.3" r="0.72" fill="#d08050" opacity="0.70"/>
<circle cx="956.8" cy="236.0" r="0.74" fill="#d8c080" opacity="0.39"/>
<circle cx="913.8" cy="457.0" r="0.83" fill="#8088e0" opacity="0.72"/>
<circle cx="860.8" cy="378.4" r="0.83" fill="#d08050" opacity="0.63"/>
<circle cx="476.3" cy="761.5" r="0.87" fill="#c8c8d0" opacity="0.56"/>
<circle cx="113.6" cy="660.7" r="0.75" fill="#d8c080" opacity="0.46"/>
<circle cx="671.2" cy="166.4" r="0.84" fill="#d8c080" opacity="0.50"/>
<circle cx="510.7" cy="308.9" r="0.70" fill="#c8c8d0" opacity="0.37"/>
<circle cx="416.5" cy="784.4" r="0.76" fill="#8088e0" opacity="0.39"/>
<circle cx="312.8" cy="249.7" r="0.71" fill="#d8c080" opacity="0.78"/>
<circle cx="438.8" cy="411.2" r="0.66" fill="#d8c080" opacity="0.83"/>
<circle cx="219.6" cy="318.9" r="0.93" fill="#c8c8d0" opacity="0.31"/>
<circle cx="225.2" cy="355.2" r="0.75" fill="#8088e0" opacity="0.53"/>
<circle cx="577.3" cy="843.9" r="0.95" fill="#8088e0" opacity="0.55"/>
<circle cx="930.9" cy="645.5" r="0.76" fill="#d8c080" opacity="0.52"/>
<circle cx="499.6" cy="441.5" r="0.68" fill="#c8c8d0" opacity="0.34"/>
<circle cx="206.8" cy="397.6" r="0.83" fill="#8088e0" opacity="0.36"/>
<circle cx="550.1" cy="840.8" r="0.68" fill="#8088e0" opacity="0.34"/>
<circle cx="403.0" cy="611.9" r="0.79" fill="#d08050" opacity="0.63"/>
<circle cx="163.8" cy="505.3" r="0.72" fill="#d8c080" opacity="0.56"/>
<circle cx="190.2" cy="695.8" r="0.88" fill="#c8c8d0" opacity="0.56"/>
<circle cx="531.5" cy="299.4" r="0.82" fill="#d08050" opacity="0.38"/>
<circle cx="82.8" cy="534.5" r="0.70" fill="#8088e0" opacity="0.68"/>
<circle cx="394.3" cy="271.6" r="0.91" fill="#c8c8d0" opacity="0.59"/>
<circle cx="360.3" cy="312.4" r="0.93" fill="#c8c8d0" opacity="0.74"/>
<circle cx="736.5" cy="315.1" r="0.61" fill="#d8c080" opacity="0.50"/>
<circle cx="83.6" cy="353.4" r="0.84" fill="#c8c8d0" opacity="0.41"/>
<circle cx="373.7" cy="738.6" r="0.75" fill="#d08050" opacity="0.83"/>
<circle cx="260.2" cy="315.1" r="0.79" fill="#c8c8d0" opacity="0.49"/>
<circle cx="961.5" cy="594.3" r="0.86" fill="#8088e0" opacity="0.56"/>
<circle cx="791.3" cy="211.7" r="0.91" fill="#8088e0" opacity="0.80"/>
<circle cx="745.9" cy="498.0" r="0.85" fill="#8088e0" opacity="0.54"/>
<circle cx="137.5" cy="838.8" r="0.90" fill="#d8c080" opacity="0.55"/>
<circle cx="135.9" cy="265.6" r="0.84" fill="#8088e0" opacity="0.32"/>
<circle cx="484.7" cy="627.5" r="0.74" fill="#d8c080" opacity="0.66"/>
<circle cx="561.1" cy="245.4" r="0.89" fill="#8088e0" opacity="0.74"/>
<circle cx="152.2" cy="695.6" r="0.95" fill="#8088e0" opacity="0.54"/>
<circle cx="815.6" cy="303.6" r="0.80" fill="#c8c8d0" opacity="0.42"/>
<circle cx="758.3" cy="387.3" r="0.62" fill="#d8c080" opacity="0.76"/>
<circle cx="736.5" cy="803.5" r="0.95" fill="#d8c080" opacity="0.75"/>
<circle cx="177.9" cy="260.5" r="0.91" fill="#8088e0" opacity="0.78"/>
<circle cx="616.0" cy="715.0" r="0.79" fill="#8088e0" opacity="0.39"/>
<circle cx="723.0" cy="555.1" r="0.81" fill="#d08050" opacity="0.68"/>
<circle cx="500.4" cy="715.3" r="0.71" fill="#8088e0" opacity="0.44"/>
<circle cx="766.2" cy="519.6" r="0.96" fill="#8088e0" opacity="0.72"/>
<circle cx="464.5" cy="595.9" r="0.78" fill="#c8c8d0" opacity="0.68"/>
<circle cx="547.0" cy="498.0" r="0.95" fill="#c8c8d0" opacity="0.68"/>
<circle cx="922.0" cy="339.0" r="0.65" fill="#c8c8d0" opacity="0.76"/>
<circle cx="169.5" cy="471.9" r="0.77" fill="#8088e0" opacity="0.67"/>
<circle cx="253.0" cy="370.4" r="0.66" fill="#8088e0" opacity="0.79"/>
<circle cx="714.7" cy="630.7" r="0.65" fill="#8088e0" opacity="0.44"/>
<circle cx="486.9" cy="693.6" r="0.79" fill="#8088e0" opacity="0.52"/>
<circle cx="965.7" cy="756.0" r="1.00" fill="#8088e0" opacity="0.69"/>
<circle cx="428.3" cy="456.7" r="0.89" fill="#d08050" opacity="0.48"/>
<circle cx="75.9" cy="553.3" r="0.75" fill="#d8c080" opacity="0.69"/>
<circle cx="532.5" cy="365.1" r="0.97" fill="#8088e0" opacity="0.36"/>
<circle cx="267.6" cy="788.0" r="0.62" fill="#8088e0" opacity="0.45"/>
<circle cx="772.3" cy="346.9" r="0.94" fill="#8088e0" opacity="0.75"/>
<circle cx="677.9" cy="838.7" r="0.97" fill="#d8c080" opacity="0.38"/>
<circle cx="581.2" cy="659.9" r="0.92" fill="#8088e0" opacity="0.45"/>
<circle cx="226.1" cy="801.8" r="0.85" fill="#c8c8d0" opacity="0.82"/>
<circle cx="793.1" cy="211.0" r="0.95" fill="#c8c8d0" opacity="0.34"/>
<circle cx="474.1" cy="396.9" r="0.71" fill="#d8c080" opacity="0.81"/>
<circle cx="176.5" cy="533.6" r="0.99" fill="#c8c8d0" opacity="0.82"/>
<circle cx="298.2" cy="281.9" r="0.81" fill="#c8c8d0" opacity="0.65"/>
<circle cx="246.8" cy="474.5" r="0.92" fill="#8088e0" opacity="0.45"/>
<circle cx="970.0" cy="176.9" r="0.82" fill="#8088e0" opacity="0.70"/>
<circle cx="231.7" cy="495.6" r="0.93" fill="#d8c080" opacity="0.36"/>
<circle cx="454.3" cy="510.4" r="0.72" fill="#d8c080" opacity="0.83"/>
<circle cx="255.3" cy="317.1" r="0.88" fill="#c8c8d0" opacity="0.76"/>
<circle cx="641.2" cy="444.6" r="0.93" fill="#d08050" opacity="0.84"/>
<circle cx="71.1" cy="605.3" r="0.62" fill="#c8c8d0" opacity="0.54"/>
<circle cx="668.0" cy="427.3" r="0.88" fill="#c8c8d0" opacity="0.63"/>
<circle cx="99.5" cy="284.9" r="0.71" fill="#c8c8d0" opacity="0.55"/>
<circle cx="940.0" cy="858.1" r="0.99" fill="#d08050" opacity="0.43"/>
<circle cx="341.9" cy="409.6" r="0.63" fill="#8088e0" opacity="0.48"/>
<circle cx="313.8" cy="627.6" r="0.60" fill="#c8c8d0" opacity="0.58"/>
<circle cx="300.2" cy="215.3" r="0.76" fill="#d8c080" opacity="0.62"/>
<circle cx="332.8" cy="608.4" r="0.81" fill="#8088e0" opacity="0.62"/>
<circle cx="746.2" cy="628.7" r="0.89" fill="#d8c080" opacity="0.72"/>
<circle cx="511.2" cy="356.9" r="0.93" fill="#8088e0" opacity="0.32"/>
<circle cx="875.9" cy="606.7" r="0.90" fill="#8088e0" opacity="0.80"/>
<circle cx="579.3" cy="741.8" r="0.83" fill="#8088e0" opacity="0.75"/>
<circle cx="876.7" cy="647.1" r="0.62" fill="#c8c8d0" opacity="0.35"/>
<circle cx="642.2" cy="848.5" r="0.82" fill="#d8c080" opacity="0.76"/>
<circle cx="633.7" cy="605.9" r="0.60" fill="#c8c8d0" opacity="0.57"/>
<circle cx="789.5" cy="694.7" r="0.63" fill="#8088e0" opacity="0.66"/>
<circle cx="733.6" cy="333.6" r="0.69" fill="#8088e0" opacity="0.77"/>
<circle cx="751.7" cy="318.0" r="0.75" fill="#d8c080" opacity="0.57"/>
<circle cx="497.3" cy="647.7" r="0.86" fill="#8088e0" opacity="0.64"/>
<circle cx="129.0" cy="257.3" r="0.88" fill="#c8c8d0" opacity="0.66"/>
<circle cx="627.6" cy="247.1" r="0.71" fill="#d8c080" opacity="0.33"/>
<circle cx="674.2" cy="653.9" r="0.81" fill="#d8c080" opacity="0.46"/>
<circle cx="484.1" cy="489.5" r="0.82" fill="#8088e0" opacity="0.85"/>
<circle cx="343.8" cy="212.5" r="0.78" fill="#d8c080" opacity="0.31"/>
<circle cx="809.8" cy="854.8" r="0.75" fill="#d8c080" opacity="0.85"/>
<circle cx="898.5" cy="827.4" r="0.66" fill="#8088e0" opacity="0.62"/>
<circle cx="538.6" cy="843.6" r="0.85" fill="#8088e0" opacity="0.63"/>
<circle cx="314.4" cy="232.0" r="0.96" fill="#d08050" opacity="0.43"/>
<circle cx="503.8" cy="168.1" r="0.87" fill="#8088e0" opacity="0.82"/>
<circle cx="429.8" cy="679.4" r="0.73" fill="#d8c080" opacity="0.49"/>
<circle cx="828.5" cy="151.3" r="0.65" fill="#d08050" opacity="0.76"/>
<circle cx="907.5" cy="669.1" r="0.63" fill="#c8c8d0" opacity="0.44"/>
<circle cx="415.8" cy="783.3" r="0.77" fill="#8088e0" opacity="0.50"/>
<circle cx="310.3" cy="185.1" r="0.86" fill="#8088e0" opacity="0.33"/>
<circle cx="640.3" cy="258.4" r="0.73" fill="#c8c8d0" opacity="0.54"/>
<circle cx="767.0" cy="721.6" r="0.92" fill="#d8c080" opacity="0.79"/>
<circle cx="636.5" cy="815.0" r="0.62" fill="#c8c8d0" opacity="0.70"/>
<circle cx="729.6" cy="478.2" r="0.71" fill="#8088e0" opacity="0.65"/>
<circle cx="102.9" cy="824.7" r="0.77" fill="#8088e0" opacity="0.39"/>
<circle cx="316.4" cy="336.2" r="0.70" fill="#c8c8d0" opacity="0.52"/>
<circle cx="501.1" cy="636.9" r="0.66" fill="#8088e0" opacity="0.39"/>
<circle cx="248.6" cy="809.5" r="0.78" fill="#d8c080" opacity="0.60"/>
<circle cx="363.2" cy="702.7" r="0.68" fill="#d8c080" opacity="0.38"/>
<circle cx="141.2" cy="398.9" r="0.75" fill="#8088e0" opacity="0.48"/>
<circle cx="800.2" cy="297.2" r="0.77" fill="#8088e0" opacity="0.71"/>
<circle cx="437.5" cy="531.6" r="0.90" fill="#d8c080" opacity="0.45"/>
<circle cx="514.8" cy="568.1" r="0.80" fill="#d08050" opacity="0.37"/>
<circle cx="635.4" cy="778.2" r="0.96" fill="#c8c8d0" opacity="0.35"/>
<circle cx="410.6" cy="620.1" r="0.94" fill="#d8c080" opacity="0.82"/>
<circle cx="858.4" cy="165.9" r="0.91" fill="#8088e0" opacity="0.53"/>
<circle cx="795.5" cy="854.9" r="0.76" fill="#d8c080" opacity="0.30"/>
<circle cx="907.9" cy="751.0" r="0.70" fill="#d8c080" opacity="0.83"/>
<circle cx="158.0" cy="262.4" r="0.89" fill="#8088e0" opacity="0.82"/>
<circle cx="651.6" cy="706.8" r="0.91" fill="#d8c080" opacity="0.35"/>
<circle cx="59.3" cy="241.5" r="0.72" fill="#8088e0" opacity="0.66"/>
<circle cx="175.3" cy="333.3" r="0.64" fill="#d8c080" opacity="0.68"/>
<circle cx="122.5" cy="531.8" r="0.69" fill="#c8c8d0" opacity="0.51"/>
<circle cx="609.2" cy="157.6" r="0.71" fill="#c8c8d0" opacity="0.85"/>
<circle cx="348.1" cy="761.1" r="0.69" fill="#c8c8d0" opacity="0.56"/>
<circle cx="284.6" cy="849.3" r="0.68" fill="#c8c8d0" opacity="0.33"/>
<circle cx="869.4" cy="621.1" r="0.87" fill="#8088e0" opacity="0.44"/>
<circle cx="906.4" cy="315.1" r="0.89" fill="#8088e0" opacity="0.68"/>
<circle cx="390.2" cy="438.5" r="0.90" fill="#8088e0" opacity="0.74"/>
<circle cx="521.0" cy="299.4" r="0.93" fill="#c8c8d0" opacity="0.47"/>
<circle cx="269.7" cy="311.2" r="0.85" fill="#c8c8d0" opacity="0.36"/>
<circle cx="617.5" cy="802.6" r="0.87" fill="#d8c080" opacity="0.53"/>
<circle cx="928.0" cy="256.6" r="0.61" fill="#d8c080" opacity="0.33"/>
<circle cx="604.6" cy="452.4" r="0.78" fill="#8088e0" opacity="0.40"/>
<circle cx="710.9" cy="378.7" r="0.97" fill="#8088e0" opacity="0.85"/>
<circle cx="359.9" cy="285.1" r="0.87" fill="#d8c080" opacity="0.32"/>
<circle cx="405.2" cy="422.2" r="0.64" fill="#d08050" opacity="0.54"/>
<circle cx="129.7" cy="208.8" r="0.65" fill="#d8c080" opacity="0.83"/>
<circle cx="942.2" cy="301.0" r="0.72" fill="#d08050" opacity="0.72"/>
<circle cx="795.2" cy="213.9" r="0.82" fill="#d8c080" opacity="0.41"/>
<circle cx="467.3" cy="385.4" r="0.76" fill="#d8c080" opacity="0.32"/>
<circle cx="802.4" cy="708.1" r="0.79" fill="#8088e0" opacity="0.51"/>
<circle cx="794.7" cy="195.1" r="0.96" fill="#c8c8d0" opacity="0.71"/>
<circle cx="368.9" cy="348.2" r="0.89" fill="#8088e0" opacity="0.44"/>
<circle cx="348.2" cy="350.7" r="0.84" fill="#8088e0" opacity="0.70"/>
<circle cx="796.8" cy="839.0" r="0.69" fill="#8088e0" opacity="0.31"/>
<circle cx="493.7" cy="846.5" r="0.97" fill="#d8c080" opacity="0.73"/>
<circle cx="805.2" cy="246.6" r="0.92" fill="#d8c080" opacity="0.40"/>
<circle cx="735.2" cy="749.0" r="0.73" fill="#8088e0" opacity="0.63"/>
<circle cx="351.0" cy="413.4" r="0.76" fill="#8088e0" opacity="0.58"/>
<circle cx="204.7" cy="446.8" r="0.82" fill="#8088e0" opacity="0.56"/>
<circle cx="205.4" cy="460.5" r="0.71" fill="#8088e0" opacity="0.84"/>
<circle cx="135.1" cy="220.2" r="0.99" fill="#d8c080" opacity="0.84"/>
<circle cx="216.8" cy="246.8" r="0.87" fill="#d8c080" opacity="0.64"/>
<circle cx="743.9" cy="766.6" r="0.72" fill="#8088e0" opacity="0.73"/>
<circle cx="314.2" cy="344.9" r="0.68" fill="#c8c8d0" opacity="0.71"/>
<circle cx="284.9" cy="328.6" r="0.96" fill="#8088e0" opacity="0.45"/>
<circle cx="230.6" cy="197.2" r="0.80" fill="#c8c8d0" opacity="0.85"/>
<circle cx="270.2" cy="738.5" r="0.64" fill="#d8c080" opacity="0.85"/>
<circle cx="493.4" cy="746.3" r="0.62" fill="#d8c080" opacity="0.80"/>
<circle cx="327.3" cy="236.8" r="0.93" fill="#c8c8d0" opacity="0.63"/>
<circle cx="236.0" cy="204.7" r="0.70" fill="#8088e0" opacity="0.55"/>
<circle cx="771.2" cy="838.5" r="0.88" fill="#8088e0" opacity="0.65"/>
<circle cx="378.7" cy="177.3" r="0.68" fill="#d08050" opacity="0.38"/>
<circle cx="291.8" cy="586.4" r="0.93" fill="#c8c8d0" opacity="0.75"/>
<circle cx="433.0" cy="420.7" r="0.61" fill="#c8c8d0" opacity="0.34"/>
<circle cx="512.5" cy="502.0" r="0.76" fill="#d8c080" opacity="0.36"/>
<circle cx="562.5" cy="615.3" r="0.76" fill="#8088e0" opacity="0.66"/>
<circle cx="306.7" cy="869.4" r="0.62" fill="#c8c8d0" opacity="0.53"/>
<circle cx="741.5" cy="793.3" r="0.95" fill="#d8c080" opacity="0.53"/>
<circle cx="971.9" cy="414.8" r="0.76" fill="#c8c8d0" opacity="0.51"/>
<circle cx="921.8" cy="466.1" r="0.93" fill="#8088e0" opacity="0.53"/>
<circle cx="430.5" cy="792.7" r="0.65" fill="#d8c080" opacity="0.73"/>
<circle cx="105.4" cy="253.7" r="0.85" fill="#d8c080" opacity="0.35"/>
<circle cx="398.1" cy="517.2" r="0.66" fill="#8088e0" opacity="0.49"/>
<circle cx="215.5" cy="198.8" r="0.92" fill="#d8c080" opacity="0.57"/>
<circle cx="944.6" cy="293.7" r="0.62" fill="#8088e0" opacity="0.76"/>
<circle cx="895.0" cy="379.0" r="0.88" fill="#d8c080" opacity="0.35"/>
<circle cx="689.1" cy="798.7" r="0.85" fill="#c8c8d0" opacity="0.64"/>
<circle cx="237.8" cy="494.3" r="0.98" fill="#c8c8d0" opacity="0.32"/>
<circle cx="201.5" cy="411.5" r="0.89" fill="#8088e0" opacity="0.44"/>
<circle cx="880.8" cy="179.9" r="0.73" fill="#8088e0" opacity="0.67"/>
<circle cx="415.5" cy="481.8" r="0.72" fill="#c8c8d0" opacity="0.66"/>
<circle cx="286.6" cy="433.3" r="0.78" fill="#d08050" opacity="0.55"/>
<circle cx="79.4" cy="600.6" r="0.78" fill="#d8c080" opacity="0.56"/>
<circle cx="625.2" cy="746.2" r="0.76" fill="#8088e0" opacity="0.75"/>
<circle cx="119.5" cy="411.0" r="0.78" fill="#d08050" opacity="0.35"/>
<circle cx="525.8" cy="179.7" r="0.89" fill="#8088e0" opacity="0.35"/>
<circle cx="771.1" cy="522.4" r="0.96" fill="#8088e0" opacity="0.71"/>
<circle cx="656.6" cy="720.9" r="1.00" fill="#8088e0" opacity="0.77"/>
<circle cx="729.3" cy="743.3" r="0.95" fill="#c8c8d0" opacity="0.37"/>
<circle cx="322.0" cy="740.4" r="0.89" fill="#8088e0" opacity="0.68"/>
<circle cx="260.8" cy="756.5" r="0.96" fill="#c8c8d0" opacity="0.39"/>
<circle cx="310.2" cy="743.8" r="0.99" fill="#8088e0" opacity="0.44"/>
<circle cx="498.3" cy="580.9" r="0.61" fill="#c8c8d0" opacity="0.48"/>
<circle cx="225.0" cy="267.4" r="0.96" fill="#c8c8d0" opacity="0.67"/>
<circle cx="212.7" cy="721.4" r="0.62" fill="#8088e0" opacity="0.72"/>
<circle cx="845.1" cy="853.4" r="0.83" fill="#d8c080" opacity="0.61"/>
<circle cx="867.3" cy="226.2" r="0.75" fill="#d8c080" opacity="0.71"/>
<circle cx="402.6" cy="418.6" r="0.91" fill="#8088e0" opacity="0.50"/>
<circle cx="463.6" cy="278.7" r="0.81" fill="#8088e0" opacity="0.46"/>
<circle cx="342.3" cy="853.2" r="0.90" fill="#d08050" opacity="0.70"/>
<circle cx="261.2" cy="361.8" r="0.75" fill="#d8c080" opacity="0.53"/>
<circle cx="101.8" cy="505.6" r="0.60" fill="#8088e0" opacity="0.31"/>
<circle cx="383.5" cy="227.4" r="0.77" fill="#d08050" opacity="0.59"/>
<circle cx="334.2" cy="247.4" r="0.79" fill="#d08050" opacity="0.64"/>
<circle cx="181.6" cy="831.8" r="0.78" fill="#c8c8d0" opacity="0.69"/>
<circle cx="116.4" cy="255.3" r="0.71" fill="#c8c8d0" opacity="0.52"/>
<circle cx="68.5" cy="619.5" r="0.83" fill="#d08050" opacity="0.63"/>
<circle cx="609.9" cy="526.8" r="0.96" fill="#d8c080" opacity="0.44"/>
<circle cx="98.3" cy="537.0" r="0.66" fill="#d8c080" opacity="0.40"/>
<circle cx="894.1" cy="226.4" r="0.68" fill="#c8c8d0" opacity="0.38"/>
<circle cx="615.6" cy="519.1" r="0.67" fill="#d8c080" opacity="0.75"/>
<circle cx="341.7" cy="368.6" r="0.89" fill="#8088e0" opacity="0.85"/>
<circle cx="496.3" cy="542.0" r="0.90" fill="#d8c080" opacity="0.76"/>
<circle cx="484.6" cy="690.0" r="1.00" fill="#d8c080" opacity="0.40"/>
<circle cx="297.7" cy="618.8" r="0.90" fill="#8088e0" opacity="0.48"/>
<circle cx="695.4" cy="765.4" r="0.82" fill="#8088e0" opacity="0.45"/>
<circle cx="457.9" cy="724.0" r="0.97" fill="#c8c8d0" opacity="0.46"/>
<circle cx="878.0" cy="212.2" r="0.96" fill="#8088e0" opacity="0.39"/>
<circle cx="829.9" cy="297.6" r="0.73" fill="#8088e0" opacity="0.71"/>
<circle cx="865.1" cy="389.2" r="0.94" fill="#c8c8d0" opacity="0.51"/>
<circle cx="903.2" cy="864.6" r="0.81" fill="#d8c080" opacity="0.56"/>
<circle cx="63.9" cy="169.3" r="0.72" fill="#c8c8d0" opacity="0.61"/>
<circle cx="252.4" cy="603.3" r="0.67" fill="#8088e0" opacity="0.61"/>
<circle cx="88.2" cy="231.5" r="0.66" fill="#8088e0" opacity="0.49"/>
<circle cx="84.3" cy="180.3" r="0.89" fill="#8088e0" opacity="0.68"/>
<circle cx="118.3" cy="579.9" r="0.98" fill="#d08050" opacity="0.41"/>
<circle cx="547.6" cy="633.5" r="0.68" fill="#d8c080" opacity="0.36"/>
<circle cx="160.7" cy="175.1" r="0.85" fill="#8088e0" opacity="0.75"/>
<circle cx="321.5" cy="222.7" r="0.86" fill="#8088e0" opacity="0.74"/>
<circle cx="328.0" cy="395.0" r="0.70" fill="#c8c8d0" opacity="0.31"/>
<circle cx="317.1" cy="671.1" r="0.91" fill="#d08050" opacity="0.80"/>
<circle cx="610.0" cy="496.6" r="0.61" fill="#c8c8d0" opacity="0.64"/>
<circle cx="436.6" cy="467.7" r="0.88" fill="#8088e0" opacity="0.49"/>
<circle cx="551.2" cy="307.7" r="0.71" fill="#8088e0" opacity="0.62"/>
<circle cx="457.9" cy="531.1" r="0.99" fill="#c8c8d0" opacity="0.72"/>
<circle cx="62.0" cy="507.3" r="0.93" fill="#d8c080" opacity="0.68"/>
<circle cx="944.9" cy="581.4" r="0.66" fill="#c8c8d0" opacity="0.62"/>
<circle cx="805.6" cy="833.1" r="0.64" fill="#c8c8d0" opacity="0.57"/>
<circle cx="641.7" cy="208.9" r="0.74" fill="#8088e0" opacity="0.65"/>
<circle cx="426.0" cy="437.3" r="0.86" fill="#8088e0" opacity="0.53"/>
<circle cx="399.1" cy="370.7" r="0.80" fill="#d8c080" opacity="0.80"/>
<circle cx="405.8" cy="793.5" r="0.65" fill="#c8c8d0" opacity="0.82"/>
<circle cx="602.8" cy="651.8" r="0.73" fill="#8088e0" opacity="0.49"/>
<circle cx="200.4" cy="763.8" r="0.78" fill="#d08050" opacity="0.39"/>
<circle cx="767.2" cy="571.6" r="0.86" fill="#8088e0" opacity="0.48"/>
<circle cx="696.7" cy="519.6" r="0.88" fill="#c8c8d0" opacity="0.47"/>
<circle cx="831.6" cy="262.5" r="0.89" fill="#8088e0" opacity="0.84"/>
<circle cx="610.9" cy="403.8" r="0.68" fill="#c8c8d0" opacity="0.48"/>
<circle cx="952.2" cy="680.5" r="0.86" fill="#8088e0" opacity="0.39"/>
<circle cx="237.2" cy="259.9" r="0.89" fill="#8088e0" opacity="0.74"/>
<circle cx="456.8" cy="292.8" r="0.95" fill="#8088e0" opacity="0.45"/>
<circle cx="483.4" cy="159.2" r="0.80" fill="#d8c080" opacity="0.68"/>
<circle cx="637.9" cy="487.3" r="0.90" fill="#8088e0" opacity="0.44"/>
<circle cx="63.1" cy="326.4" r="0.83" fill="#d8c080" opacity="0.69"/>
<circle cx="651.5" cy="765.9" r="0.86" fill="#c8c8d0" opacity="0.67"/>
<circle cx="474.2" cy="377.9" r="0.70" fill="#8088e0" opacity="0.79"/>
<circle cx="424.9" cy="668.8" r="0.77" fill="#8088e0" opacity="0.44"/>
<circle cx="475.4" cy="602.5" r="0.86" fill="#d8c080" opacity="0.59"/>
<circle cx="858.5" cy="801.2" r="0.76" fill="#d08050" opacity="0.73"/>
<circle cx="507.2" cy="859.5" r="0.69" fill="#8088e0" opacity="0.44"/>
<circle cx="714.8" cy="842.6" r="0.64" fill="#c8c8d0" opacity="0.59"/>
<circle cx="584.9" cy="543.9" r="0.86" fill="#d8c080" opacity="0.58"/>
<circle cx="818.2" cy="529.8" r="0.78" fill="#d8c080" opacity="0.71"/>
<circle cx="966.1" cy="283.8" r="0.85" fill="#8088e0" opacity="0.70"/>
<circle cx="642.7" cy="333.8" r="0.61" fill="#d8c080" opacity="0.52"/>
<circle cx="441.8" cy="456.2" r="0.64" fill="#d08050" opacity="0.62"/>
<circle cx="336.3" cy="441.5" r="0.98" fill="#c8c8d0" opacity="0.85"/>
<circle cx="481.8" cy="269.8" r="0.85" fill="#8088e0" opacity="0.75"/>
<circle cx="488.2" cy="559.2" r="0.66" fill="#c8c8d0" opacity="0.75"/>
<circle cx="668.8" cy="754.7" r="0.72" fill="#d8c080" opacity="0.56"/>
<circle cx="560.8" cy="241.1" r="0.94" fill="#d8c080" opacity="0.50"/>
<circle cx="303.2" cy="423.8" r="0.87" fill="#c8c8d0" opacity="0.84"/>
<circle cx="499.6" cy="736.4" r="0.86" fill="#c8c8d0" opacity="0.50"/>
<circle cx="351.7" cy="503.0" r="0.74" fill="#8088e0" opacity="0.66"/>
<circle cx="909.6" cy="772.0" r="0.83" fill="#8088e0" opacity="0.35"/>
<circle cx="355.8" cy="836.2" r="0.61" fill="#d08050" opacity="0.65"/>
<circle cx="68.5" cy="842.9" r="0.64" fill="#c8c8d0" opacity="0.44"/>
<circle cx="188.9" cy="320.1" r="0.66" fill="#d8c080" opacity="0.49"/>
<circle cx="887.0" cy="726.3" r="0.88" fill="#8088e0" opacity="0.64"/>
<circle cx="954.1" cy="215.8" r="0.88" fill="#c8c8d0" opacity="0.41"/>
<circle cx="544.7" cy="690.1" r="0.65" fill="#d8c080" opacity="0.67"/>
<circle cx="166.6" cy="455.1" r="0.82" fill="#8088e0" opacity="0.56"/>
<circle cx="502.2" cy="809.2" r="0.67" fill="#d8c080" opacity="0.44"/>
<circle cx="607.8" cy="684.8" r="0.79" fill="#8088e0" opacity="0.76"/>
<circle cx="573.9" cy="634.3" r="0.77" fill="#d8c080" opacity="0.51"/>
<circle cx="938.9" cy="204.9" r="0.61" fill="#d08050" opacity="0.65"/>
<circle cx="617.1" cy="646.9" r="0.64" fill="#d08050" opacity="0.74"/>
<circle cx="502.0" cy="701.2" r="0.89" fill="#8088e0" opacity="0.32"/>
<circle cx="631.4" cy="396.5" r="0.91" fill="#d08050" opacity="0.49"/>
<circle cx="566.1" cy="814.2" r="0.77" fill="#c8c8d0" opacity="0.54"/>
<circle cx="566.0" cy="751.9" r="0.80" fill="#c8c8d0" opacity="0.50"/>
<circle cx="364.0" cy="866.6" r="0.86" fill="#d08050" opacity="0.84"/>
<circle cx="784.2" cy="390.9" r="0.65" fill="#d08050" opacity="0.69"/>
<circle cx="950.0" cy="213.8" r="0.82" fill="#8088e0" opacity="0.52"/>
<circle cx="430.3" cy="567.9" r="0.60" fill="#d8c080" opacity="0.47"/>
<circle cx="232.2" cy="820.8" r="0.96" fill="#8088e0" opacity="0.73"/>
<circle cx="619.0" cy="599.0" r="0.87" fill="#8088e0" opacity="0.42"/>
<circle cx="477.9" cy="705.2" r="0.95" fill="#8088e0" opacity="0.66"/>
<circle cx="444.6" cy="223.2" r="0.93" fill="#8088e0" opacity="0.50"/>
<circle cx="779.3" cy="559.2" r="0.67" fill="#c8c8d0" opacity="0.77"/>
<circle cx="89.4" cy="164.8" r="0.81" fill="#8088e0" opacity="0.57"/>
<circle cx="814.3" cy="713.3" r="0.97" fill="#d8c080" opacity="0.62"/>
<circle cx="467.4" cy="160.3" r="1.00" fill="#d8c080" opacity="0.63"/>
<circle cx="662.7" cy="263.1" r="0.63" fill="#d8c080" opacity="0.60"/>
<circle cx="491.0" cy="802.1" r="0.60" fill="#8088e0" opacity="0.53"/>
<circle cx="671.8" cy="868.3" r="0.65" fill="#8088e0" opacity="0.42"/>
<circle cx="491.1" cy="350.5" r="0.90" fill="#c8c8d0" opacity="0.55"/>
<circle cx="904.2" cy="416.4" r="0.63" fill="#8088e0" opacity="0.70"/>
<circle cx="634.4" cy="666.3" r="0.96" fill="#d8c080" opacity="0.67"/>
<circle cx="895.7" cy="188.3" r="0.61" fill="#8088e0" opacity="0.31"/>
<circle cx="654.7" cy="745.0" r="0.72" fill="#8088e0" opacity="0.51"/>
<circle cx="608.3" cy="847.2" r="0.73" fill="#d8c080" opacity="0.63"/>
<circle cx="928.0" cy="679.8" r="0.66" fill="#d8c080" opacity="0.67"/>
<circle cx="789.2" cy="414.5" r="0.77" fill="#8088e0" opacity="0.65"/>
<circle cx="411.7" cy="722.4" r="0.83" fill="#c8c8d0" opacity="0.73"/>
<circle cx="326.1" cy="194.1" r="0.89" fill="#d08050" opacity="0.78"/>
<circle cx="72.2" cy="260.0" r="0.99" fill="#c8c8d0" opacity="0.62"/>
<circle cx="283.7" cy="432.0" r="0.96" fill="#d8c080" opacity="0.63"/>
<circle cx="798.5" cy="356.2" r="0.71" fill="#8088e0" opacity="0.48"/>
<circle cx="202.2" cy="820.2" r="0.66" fill="#8088e0" opacity="0.46"/>
<circle cx="874.7" cy="872.8" r="0.94" fill="#8088e0" opacity="0.45"/>
<circle cx="798.0" cy="648.4" r="0.63" fill="#d8c080" opacity="0.49"/>
<circle cx="565.7" cy="730.5" r="0.89" fill="#c8c8d0" opacity="0.73"/>
<circle cx="958.7" cy="375.3" r="0.79" fill="#8088e0" opacity="0.67"/>
<circle cx="247.4" cy="335.4" r="0.78" fill="#8088e0" opacity="0.74"/>
<circle cx="138.4" cy="737.2" r="0.83" fill="#8088e0" opacity="0.43"/>
<circle cx="880.5" cy="794.3" r="0.84" fill="#d08050" opacity="0.56"/>
<circle cx="231.5" cy="290.0" r="0.72" fill="#8088e0" opacity="0.74"/>
<circle cx="587.9" cy="411.3" r="0.97" fill="#8088e0" opacity="0.44"/>
<circle cx="510.3" cy="780.7" r="0.91" fill="#d08050" opacity="0.65"/>
<circle cx="201.2" cy="584.8" r="0.84" fill="#d08050" opacity="0.45"/>
<circle cx="144.3" cy="299.0" r="0.69" fill="#d8c080" opacity="0.62"/>
<circle cx="906.7" cy="353.7" r="0.91" fill="#8088e0" opacity="0.82"/>
<circle cx="808.9" cy="851.4" r="0.74" fill="#c8c8d0" opacity="0.76"/>
<circle cx="970.1" cy="425.3" r="0.82" fill="#8088e0" opacity="0.33"/>
<circle cx="856.4" cy="483.6" r="0.86" fill="#8088e0" opacity="0.77"/>
<circle cx="903.6" cy="664.2" r="0.83" fill="#8088e0" opacity="0.44"/>
<circle cx="645.5" cy="846.3" r="0.94" fill="#d8c080" opacity="0.40"/>
<circle cx="398.1" cy="321.2" r="0.98" fill="#c8c8d0" opacity="0.39"/>
<circle cx="921.1" cy="193.2" r="0.62" fill="#8088e0" opacity="0.76"/>
<circle cx="779.1" cy="666.6" r="0.66" fill="#d8c080" opacity="0.33"/>
<circle cx="750.3" cy="833.9" r="0.78" fill="#c8c8d0" opacity="0.62"/>
<circle cx="656.4" cy="492.7" r="0.65" fill="#d08050" opacity="0.44"/>
<circle cx="499.4" cy="272.7" r="0.97" fill="#c8c8d0" opacity="0.74"/>
<circle cx="876.1" cy="490.6" r="0.66" fill="#c8c8d0" opacity="0.74"/>
<circle cx="821.7" cy="206.6" r="0.66" fill="#d08050" opacity="0.79"/>
<circle cx="468.1" cy="220.6" r="0.85" fill="#d8c080" opacity="0.76"/>
<circle cx="472.8" cy="397.4" r="0.85" fill="#c8c8d0" opacity="0.56"/>
<circle cx="188.9" cy="311.4" r="0.78" fill="#8088e0" opacity="0.40"/>
<circle cx="873.5" cy="469.6" r="0.76" fill="#8088e0" opacity="0.45"/>
<circle cx="200.8" cy="347.4" r="0.67" fill="#c8c8d0" opacity="0.48"/>
<circle cx="508.3" cy="381.6" r="0.99" fill="#d8c080" opacity="0.36"/>
<circle cx="110.1" cy="801.6" r="0.93" fill="#c8c8d0" opacity="0.61"/>
<circle cx="167.3" cy="699.5" r="0.70" fill="#d08050" opacity="0.54"/>
<circle cx="276.9" cy="323.4" r="0.96" fill="#d8c080" opacity="0.46"/>
<circle cx="110.7" cy="678.9" r="0.86" fill="#c8c8d0" opacity="0.38"/>
<circle cx="463.4" cy="519.7" r="0.92" fill="#8088e0" opacity="0.54"/>
<circle cx="923.3" cy="358.5" r="0.96" fill="#d08050" opacity="0.54"/>
<circle cx="258.1" cy="565.9" r="0.81" fill="#8088e0" opacity="0.76"/>
<circle cx="269.3" cy="277.9" r="0.96" fill="#8088e0" opacity="0.76"/>
<circle cx="728.2" cy="704.2" r="0.84" fill="#8088e0" opacity="0.41"/>
<circle cx="707.0" cy="740.8" r="0.63" fill="#c8c8d0" opacity="0.41"/>
<circle cx="729.9" cy="447.1" r="0.74" fill="#8088e0" opacity="0.59"/>
<circle cx="316.4" cy="615.3" r="0.76" fill="#d8c080" opacity="0.35"/>
<circle cx="757.7" cy="247.0" r="0.83" fill="#c8c8d0" opacity="0.44"/>
<circle cx="961.9" cy="176.7" r="0.94" fill="#d08050" opacity="0.62"/>
<circle cx="384.6" cy="828.6" r="0.89" fill="#8088e0" opacity="0.37"/>
<circle cx="806.8" cy="780.1" r="0.95" fill="#d08050" opacity="0.73"/>
<circle cx="586.5" cy="803.8" r="0.98" fill="#c8c8d0" opacity="0.78"/>
<circle cx="511.7" cy="523.7" r="0.99" fill="#8088e0" opacity="0.31"/>
<circle cx="263.1" cy="282.8" r="0.82" fill="#8088e0" opacity="0.47"/>
<circle cx="934.1" cy="164.2" r="0.93" fill="#c8c8d0" opacity="0.44"/>
<circle cx="642.0" cy="487.7" r="0.64" fill="#c8c8d0" opacity="0.69"/>
<circle cx="855.4" cy="672.0" r="0.79" fill="#8088e0" opacity="0.45"/>
<circle cx="595.3" cy="704.4" r="0.76" fill="#8088e0" opacity="0.37"/>
<circle cx="183.6" cy="580.8" r="0.83" fill="#c8c8d0" opacity="0.38"/>
<circle cx="742.6" cy="269.6" r="0.76" fill="#8088e0" opacity="0.82"/>
<circle cx="443.6" cy="761.3" r="0.98" fill="#8088e0" opacity="0.52"/>
<circle cx="770.4" cy="396.5" r="0.89" fill="#c8c8d0" opacity="0.76"/>
<circle cx="831.1" cy="560.9" r="0.94" fill="#d08050" opacity="0.75"/>
<circle cx="107.1" cy="526.6" r="0.77" fill="#d08050" opacity="0.44"/>
<circle cx="638.2" cy="415.3" r="0.77" fill="#8088e0" opacity="0.34"/>
<circle cx="520.9" cy="165.2" r="0.76" fill="#8088e0" opacity="0.53"/>
<circle cx="972.7" cy="480.3" r="0.95" fill="#8088e0" opacity="0.75"/>
<circle cx="869.2" cy="175.0" r="0.85" fill="#c8c8d0" opacity="0.80"/>
<circle cx="634.1" cy="737.0" r="0.70" fill="#8088e0" opacity="0.64"/>
<circle cx="535.1" cy="465.7" r="0.72" fill="#8088e0" opacity="0.46"/>
<circle cx="651.8" cy="237.6" r="0.84" fill="#c8c8d0" opacity="0.35"/>
<circle cx="912.6" cy="470.3" r="0.97" fill="#8088e0" opacity="0.79"/>
<circle cx="587.4" cy="349.6" r="0.71" fill="#8088e0" opacity="0.71"/>
<circle cx="474.4" cy="655.8" r="0.68" fill="#c8c8d0" opacity="0.66"/>
<circle cx="709.4" cy="485.5" r="0.79" fill="#c8c8d0" opacity="0.64"/>
<circle cx="342.7" cy="326.4" r="0.82" fill="#c8c8d0" opacity="0.40"/>
<circle cx="947.1" cy="438.6" r="0.98" fill="#d08050" opacity="0.39"/>
<circle cx="355.1" cy="386.9" r="1.00" fill="#c8c8d0" opacity="0.46"/>
<circle cx="329.0" cy="712.1" r="0.84" fill="#8088e0" opacity="0.60"/>
<circle cx="377.1" cy="628.8" r="0.74" fill="#d8c080" opacity="0.76"/>
<circle cx="757.5" cy="529.2" r="0.87" fill="#8088e0" opacity="0.53"/>
<circle cx="186.7" cy="297.4" r="0.81" fill="#c8c8d0" opacity="0.75"/>
<circle cx="735.4" cy="691.1" r="0.85" fill="#d8c080" opacity="0.45"/>
<circle cx="637.7" cy="662.1" r="0.60" fill="#d8c080" opacity="0.78"/>
<circle cx="760.1" cy="576.5" r="1.00" fill="#d8c080" opacity="0.52"/>
<circle cx="195.2" cy="768.8" r="0.84" fill="#c8c8d0" opacity="0.78"/>
<circle cx="406.1" cy="479.3" r="0.74" fill="#d8c080" opacity="0.46"/>
<circle cx="381.7" cy="533.0" r="0.60" fill="#d8c080" opacity="0.66"/>
<circle cx="741.9" cy="870.5" r="0.67" fill="#d8c080" opacity="0.54"/>
<circle cx="336.8" cy="255.6" r="0.64" fill="#d8c080" opacity="0.62"/>
<circle cx="901.8" cy="385.8" r="0.68" fill="#c8c8d0" opacity="0.83"/>
<circle cx="449.1" cy="812.9" r="0.70" fill="#8088e0" opacity="0.31"/>
<circle cx="879.5" cy="368.3" r="1.00" fill="#c8c8d0" opacity="0.60"/>
<circle cx="532.5" cy="526.6" r="0.74" fill="#d8c080" opacity="0.51"/>
<circle cx="603.4" cy="405.6" r="0.81" fill="#8088e0" opacity="0.67"/>
<circle cx="148.8" cy="422.6" r="0.97" fill="#d8c080" opacity="0.66"/>
<circle cx="199.4" cy="287.0" r="0.78" fill="#d8c080" opacity="0.57"/>
<circle cx="630.8" cy="875.2" r="0.90" fill="#d08050" opacity="0.68"/>
<circle cx="142.6" cy="414.1" r="0.93" fill="#d08050" opacity="0.84"/>
<circle cx="528.0" cy="230.5" r="0.93" fill="#c8c8d0" opacity="0.68"/>
<circle cx="966.1" cy="796.6" r="0.81" fill="#d8c080" opacity="0.65"/>
<circle cx="806.4" cy="301.3" r="0.62" fill="#c8c8d0" opacity="0.53"/>
<circle cx="576.1" cy="227.6" r="0.60" fill="#8088e0" opacity="0.68"/>
<circle cx="60.5" cy="667.3" r="0.76" fill="#8088e0" opacity="0.80"/>
<circle cx="148.3" cy="161.2" r="0.80" fill="#8088e0" opacity="0.41"/>
<circle cx="565.3" cy="343.7" r="0.76" fill="#8088e0" opacity="0.62"/>
<circle cx="169.4" cy="264.1" r="0.63" fill="#8088e0" opacity="0.32"/>
<circle cx="927.2" cy="507.0" r="0.92" fill="#d8c080" opacity="0.64"/>
<circle cx="115.0" cy="159.1" r="0.70" fill="#d08050" opacity="0.38"/>
<circle cx="310.6" cy="173.9" r="0.98" fill="#8088e0" opacity="0.77"/>
<circle cx="115.8" cy="289.5" r="0.69" fill="#d8c080" opacity="0.31"/>
<circle cx="421.1" cy="706.2" r="0.85" fill="#8088e0" opacity="0.54"/>
<circle cx="286.6" cy="182.0" r="0.96" fill="#8088e0" opacity="0.47"/>
<circle cx="806.2" cy="371.1" r="0.80" fill="#c8c8d0" opacity="0.83"/>
<circle cx="928.9" cy="326.9" r="0.83" fill="#d8c080" opacity="0.67"/>
<circle cx="437.2" cy="440.2" r="0.95" fill="#d8c080" opacity="0.31"/>
<circle cx="138.2" cy="273.7" r="0.99" fill="#d8c080" opacity="0.40"/>
<circle cx="324.6" cy="558.8" r="0.95" fill="#8088e0" opacity="0.48"/>
<circle cx="366.0" cy="624.1" r="0.97" fill="#8088e0" opacity="0.53"/>
<circle cx="565.9" cy="432.0" r="0.69" fill="#d8c080" opacity="0.46"/>
<circle cx="90.0" cy="633.6" r="0.70" fill="#d08050" opacity="0.74"/>
<circle cx="177.1" cy="292.9" r="0.79" fill="#8088e0" opacity="0.61"/>
<circle cx="787.0" cy="324.9" r="0.89" fill="#d08050" opacity="0.49"/>
<circle cx="403.6" cy="847.7" r="0.79" fill="#c8c8d0" opacity="0.46"/>
<circle cx="245.5" cy="774.9" r="1.00" fill="#8088e0" opacity="0.82"/>
<circle cx="604.5" cy="470.6" r="0.76" fill="#d08050" opacity="0.59"/>
<circle cx="525.8" cy="241.4" r="0.64" fill="#8088e0" opacity="0.67"/>
<circle cx="839.2" cy="685.8" r="0.89" fill="#d8c080" opacity="0.32"/>
<circle cx="191.0" cy="160.9" r="0.91" fill="#8088e0" opacity="0.68"/>
<circle cx="270.3" cy="287.1" r="0.97" fill="#8088e0" opacity="0.34"/>
<circle cx="796.4" cy="702.2" r="0.72" fill="#c8c8d0" opacity="0.34"/>
<circle cx="265.6" cy="241.8" r="0.76" fill="#d8c080" opacity="0.46"/>
<circle cx="891.5" cy="714.2" r="0.67" fill="#8088e0" opacity="0.82"/>
<circle cx="394.2" cy="732.0" r="0.61" fill="#d08050" opacity="0.79"/>
<circle cx="703.4" cy="486.8" r="0.85" fill="#d8c080" opacity="0.49"/>
<circle cx="224.6" cy="233.9" r="0.62" fill="#c8c8d0" opacity="0.69"/>
<circle cx="94.7" cy="267.9" r="0.66" fill="#c8c8d0" opacity="0.72"/>
<circle cx="735.0" cy="552.1" r="0.69" fill="#8088e0" opacity="0.61"/>
<circle cx="514.6" cy="529.1" r="0.83" fill="#d8c080" opacity="0.67"/>
<circle cx="916.0" cy="231.4" r="0.95" fill="#c8c8d0" opacity="0.80"/>
<circle cx="594.6" cy="656.7" r="0.61" fill="#c8c8d0" opacity="0.67"/>
<circle cx="350.1" cy="715.7" r="0.63" fill="#d08050" opacity="0.71"/>
<circle cx="695.0" cy="436.6" r="0.64" fill="#c8c8d0" opacity="0.45"/>
<circle cx="925.8" cy="458.7" r="0.90" fill="#d08050" opacity="0.68"/>
<circle cx="819.1" cy="607.3" r="0.87" fill="#d8c080" opacity="0.58"/>
<circle cx="246.9" cy="640.0" r="0.68" fill="#8088e0" opacity="0.57"/>
<circle cx="931.3" cy="750.7" r="0.67" fill="#c8c8d0" opacity="0.40"/>
<circle cx="774.0" cy="321.8" r="0.62" fill="#c8c8d0" opacity="0.44"/>
<circle cx="386.1" cy="449.7" r="0.65" fill="#c8c8d0" opacity="0.65"/>
<circle cx="687.3" cy="504.1" r="0.70" fill="#d8c080" opacity="0.43"/>
<circle cx="530.6" cy="474.0" r="0.65" fill="#d08050" opacity="0.68"/>
<circle cx="707.0" cy="577.7" r="0.93" fill="#c8c8d0" opacity="0.48"/>
<circle cx="560.8" cy="703.7" r="0.66" fill="#8088e0" opacity="0.67"/>
<circle cx="956.0" cy="761.1" r="0.65" fill="#d8c080" opacity="0.76"/>
<circle cx="323.3" cy="412.4" r="0.96" fill="#c8c8d0" opacity="0.32"/>
<circle cx="336.7" cy="230.5" r="0.65" fill="#c8c8d0" opacity="0.55"/>
<circle cx="355.5" cy="491.2" r="0.82" fill="#d08050" opacity="0.46"/>
<circle cx="99.8" cy="491.1" r="0.89" fill="#d8c080" opacity="0.35"/>
<circle cx="956.9" cy="560.3" r="0.98" fill="#8088e0" opacity="0.65"/>
<circle cx="505.8" cy="720.7" r="0.97" fill="#d08050" opacity="0.30"/>
<circle cx="649.0" cy="607.0" r="0.63" fill="#c8c8d0" opacity="0.66"/>
<circle cx="743.4" cy="168.4" r="0.72" fill="#d8c080" opacity="0.76"/>
<circle cx="228.3" cy="614.5" r="0.89" fill="#8088e0" opacity="0.36"/>
<circle cx="342.6" cy="599.0" r="0.93" fill="#d8c080" opacity="0.40"/>
<circle cx="351.6" cy="418.3" r="0.70" fill="#d08050" opacity="0.76"/>
<circle cx="110.9" cy="228.1" r="0.98" fill="#d8c080" opacity="0.80"/>
<circle cx="511.3" cy="513.7" r="0.84" fill="#8088e0" opacity="0.85"/>
<circle cx="632.5" cy="253.3" r="0.78" fill="#c8c8d0" opacity="0.39"/>
<circle cx="947.3" cy="215.3" r="0.79" fill="#8088e0" opacity="0.77"/>
<circle cx="258.2" cy="421.2" r="0.94" fill="#8088e0" opacity="0.76"/>
<circle cx="779.6" cy="459.7" r="0.62" fill="#c8c8d0" opacity="0.34"/>
<circle cx="709.8" cy="798.4" r="0.87" fill="#8088e0" opacity="0.54"/>
<circle cx="815.5" cy="808.1" r="0.60" fill="#8088e0" opacity="0.51"/>
<circle cx="795.4" cy="641.6" r="0.82" fill="#c8c8d0" opacity="0.56"/>
<circle cx="531.9" cy="461.9" r="0.98" fill="#8088e0" opacity="0.84"/>
<circle cx="626.4" cy="740.5" r="0.73" fill="#8088e0" opacity="0.70"/>
<circle cx="661.8" cy="561.3" r="0.79" fill="#d8c080" opacity="0.82"/>
<circle cx="651.6" cy="367.9" r="0.85" fill="#d08050" opacity="0.59"/>
<circle cx="835.7" cy="312.0" r="0.66" fill="#d8c080" opacity="0.68"/>
<circle cx="589.0" cy="554.0" r="0.70" fill="#d8c080" opacity="0.50"/>
<circle cx="462.7" cy="340.1" r="0.96" fill="#c8c8d0" opacity="0.40"/>
<circle cx="560.6" cy="231.7" r="0.68" fill="#c8c8d0" opacity="0.66"/>
<circle cx="672.6" cy="666.2" r="0.69" fill="#c8c8d0" opacity="0.60"/>
<circle cx="583.2" cy="232.3" r="0.87" fill="#8088e0" opacity="0.77"/>
<circle cx="791.9" cy="247.8" r="0.98" fill="#8088e0" opacity="0.64"/>
<circle cx="530.4" cy="484.9" r="0.99" fill="#d8c080" opacity="0.60"/>
<circle cx="233.7" cy="495.9" r="0.91" fill="#8088e0" opacity="0.38"/>
<circle cx="103.9" cy="154.9" r="4.0" fill="url(#gb)" opacity="0.8"/><circle cx="103.9" cy="154.9" r="0.80" fill="#e8eaff" opacity="0.9"/>
<circle cx="215.0" cy="151.0" r="3.0" fill="url(#gw)" opacity="0.8"/><circle cx="215.0" cy="151.0" r="0.60" fill="#ffffff" opacity="0.9"/>
<circle cx="112.7" cy="169.8" r="3.0" fill="url(#go)" opacity="0.8"/><circle cx="112.7" cy="169.8" r="0.60" fill="#ffe8d0" opacity="0.9"/>
<circle cx="205.5" cy="165.0" r="2.0" fill="url(#gw)" opacity="0.8"/><circle cx="205.5" cy="165.0" r="0.60" fill="#ffffff" opacity="0.9"/>
<circle cx="259.0" cy="175.6" r="3.0" fill="url(#gw)" opacity="0.8"/><circle cx="259.0" cy="175.6" r="0.60" fill="#ffffff" opacity="0.9"/>
<circle cx="253.4" cy="231.6" r="5.0" fill="url(#go)" opacity="0.8"/><circle cx="253.4" cy="231.6" r="1.00" fill="#ffe8d0" opacity="0.9"/>
<circle cx="284.8" cy="238.5" r="4.4" fill="url(#gw)" opacity="0.8"/><circle cx="284.8" cy="238.5" r="0.88" fill="#ffffff" opacity="0.9"/>
<circle cx="291.0" cy="248.4" r="2.0" fill="url(#gb)" opacity="0.8"/><circle cx="291.0" cy="248.4" r="0.60" fill="#e8eaff" opacity="0.9"/>
<circle cx="487.2" cy="189.4" r="4.0" fill="url(#gb)" opacity="0.8"/><circle cx="487.2" cy="189.4" r="0.80" fill="#e8eaff" opacity="0.9"/>
<circle cx="393.3" cy="154.9" r="2.0" fill="url(#go)" opacity="0.8"/><circle cx="393.3" cy="154.9" r="0.60" fill="#ffe8d0" opacity="0.9"/>
<circle cx="466.0" cy="155.7" r="2.0" fill="url(#go)" opacity="0.8"/><circle cx="466.0" cy="155.7" r="0.60" fill="#ffe8d0" opacity="0.9"/>
<circle cx="343.5" cy="254.6" r="3.0" fill="url(#go)" opacity="0.8"/><circle cx="343.5" cy="254.6" r="0.60" fill="#ffe8d0" opacity="0.9"/>
<circle cx="168.3" cy="244.6" r="2.6" fill="url(#gb)" opacity="0.8"/><circle cx="168.3" cy="244.6" r="0.60" fill="#e8eaff" opacity="0.9"/>
<circle cx="62.9" cy="257.2" r="2.6" fill="url(#gb)" opacity="0.8"/><circle cx="62.9" cy="257.2" r="0.60" fill="#e8eaff" opacity="0.9"/>
<circle cx="420.0" cy="281.4" r="2.4" fill="url(#go)" opacity="0.8"/><circle cx="420.0" cy="281.4" r="0.60" fill="#ffe8d0" opacity="0.9"/>
<circle cx="447.0" cy="271.4" r="2.4" fill="url(#go)" opacity="0.8"/><circle cx="447.0" cy="271.4" r="0.60" fill="#ffe8d0" opacity="0.9"/>
<circle cx="332.0" cy="370.3" r="3.0" fill="url(#gw)" opacity="0.8"/><circle cx="332.0" cy="370.3" r="0.60" fill="#ffffff" opacity="0.9"/>
<circle cx="267.6" cy="358.0" r="2.4" fill="url(#gb)" opacity="0.8"/><circle cx="267.6" cy="358.0" r="0.60" fill="#e8eaff" opacity="0.9"/>
<circle cx="232.3" cy="363.4" r="2.4" fill="url(#go)" opacity="0.8"/><circle cx="232.3" cy="363.4" r="0.60" fill="#ffe8d0" opacity="0.9"/>
<circle cx="339.6" cy="311.0" r="2.4" fill="url(#go)" opacity="0.8"/><circle cx="339.6" cy="311.0" r="0.60" fill="#ffe8d0" opacity="0.9"/>
<circle cx="166.0" cy="228.5" r="2.0" fill="url(#go)" opacity="0.8"/><circle cx="166.0" cy="228.5" r="0.60" fill="#ffe8d0" opacity="0.9"/>
<circle cx="360.7" cy="197.8" r="2.0" fill="url(#go)" opacity="0.8"/><circle cx="360.7" cy="197.8" r="0.60" fill="#ffe8d0" opacity="0.9"/>
<circle cx="339.6" cy="223.9" r="2.0" fill="url(#go)" opacity="0.8"/><circle cx="339.6" cy="223.9" r="0.60" fill="#ffe8d0" opacity="0.9"/>
<circle cx="506.4" cy="215.0" r="2.0" fill="url(#gb)" opacity="0.8"/><circle cx="506.4" cy="215.0" r="0.60" fill="#e8eaff" opacity="0.9"/>
<circle cx="468.0" cy="335.0" r="2.4" fill="url(#go)" opacity="0.8"/><circle cx="468.0" cy="335.0" r="0.60" fill="#ffe8d0" opacity="0.9"/>
<circle cx="462.3" cy="368.4" r="2.0" fill="url(#go)" opacity="0.8"/><circle cx="462.3" cy="368.4" r="0.60" fill="#ffe8d0" opacity="0.9"/>
<circle cx="132.7" cy="322.4" r="2.0" fill="url(#gb)" opacity="0.8"/><circle cx="132.7" cy="322.4" r="0.60" fill="#e8eaff" opacity="0.9"/>
<circle cx="153.7" cy="322.4" r="2.0" fill="url(#go)" opacity="0.8"/><circle cx="153.7" cy="322.4" r="0.60" fill="#ffe8d0" opacity="0.9"/>
<circle cx="144.0" cy="393.3" r="2.0" fill="url(#go)" opacity="0.8"/><circle cx="144.0" cy="393.3" r="0.60" fill="#ffe8d0" opacity="0.9"/>
<circle cx="289.0" cy="262.2" r="2.0" fill="url(#go)" opacity="0.8"/><circle cx="289.0" cy="262.2" r="0.60" fill="#ffe8d0" opacity="0.9"/>
<circle cx="676.2" cy="156.4" r="3.0" fill="url(#gb)" opacity="0.8"/><circle cx="676.2" cy="156.4" r="0.60" fill="#e8eaff" opacity="0.9"/>
<circle cx="752.5" cy="175.6" r="3.0" fill="url(#gw)" opacity="0.8"/><circle cx="752.5" cy="175.6" r="0.60" fill="#ffffff" opacity="0.9"/>
<circle cx="779.7" cy="225.4" r="4.0" fill="url(#gy)" opacity="0.8"/><circle cx="779.7" cy="225.4" r="0.80" fill="#fff8e0" opacity="0.9"/>
<circle cx="751.7" cy="240.0" r="3.0" fill="url(#gw)" opacity="0.8"/><circle cx="751.7" cy="240.0" r="0.60" fill="#ffffff" opacity="0.9"/>
<circle cx="734.5" cy="233.0" r="2.0" fill="url(#gw)" opacity="0.8"/><circle cx="734.5" cy="233.0" r="0.60" fill="#ffffff" opacity="0.9"/>
<circle cx="722.2" cy="236.9" r="2.4" fill="url(#gb)" opacity="0.8"/><circle cx="722.2" cy="236.9" r="0.60" fill="#e8eaff" opacity="0.9"/>
<circle cx="788.9" cy="239.2" r="2.4" fill="url(#gb)" opacity="0.8"/><circle cx="788.9" cy="239.2" r="0.60" fill="#e8eaff" opacity="0.9"/>
<circle cx="859.8" cy="259.2" r="4.0" fill="url(#gy)" opacity="0.8"/><circle cx="859.8" cy="259.2" r="0.80" fill="#fff8e0" opacity="0.9"/>
<circle cx="953.0" cy="289.0" r="3.0" fill="url(#gb)" opacity="0.8"/><circle cx="953.0" cy="289.0" r="0.60" fill="#e8eaff" opacity="0.9"/>
<circle cx="942.2" cy="284.0" r="2.0" fill="url(#gb)" opacity="0.8"/><circle cx="942.2" cy="284.0" r="0.60" fill="#e8eaff" opacity="0.9"/>
<circle cx="847.5" cy="350.4" r="4.0" fill="url(#gw)" opacity="0.8"/><circle cx="847.5" cy="350.4" r="0.80" fill="#ffffff" opacity="0.9"/>
<circle cx="861.0" cy="354.2" r="3.0" fill="url(#gb)" opacity="0.8"/><circle cx="861.0" cy="354.2" r="0.60" fill="#e8eaff" opacity="0.9"/>
<circle cx="925.4" cy="358.0" r="2.6" fill="url(#gb)" opacity="0.8"/><circle cx="925.4" cy="358.0" r="0.60" fill="#e8eaff" opacity="0.9"/>
<circle cx="539.8" cy="236.9" r="2.4" fill="url(#gw)" opacity="0.8"/><circle cx="539.8" cy="236.9" r="0.60" fill="#ffffff" opacity="0.9"/>
<circle cx="581.2" cy="231.6" r="2.4" fill="url(#gw)" opacity="0.8"/><circle cx="581.2" cy="231.6" r="0.60" fill="#ffffff" opacity="0.9"/>
<circle cx="631.0" cy="234.2" r="2.6" fill="url(#gy)" opacity="0.8"/><circle cx="631.0" cy="234.2" r="0.60" fill="#fff8e0" opacity="0.9"/>
<circle cx="656.0" cy="222.7" r="2.0" fill="url(#gb)" opacity="0.8"/><circle cx="656.0" cy="222.7" r="0.60" fill="#e8eaff" opacity="0.9"/>
<circle cx="737.5" cy="220.0" r="2.0" fill="url(#gb)" opacity="0.8"/><circle cx="737.5" cy="220.0" r="0.60" fill="#e8eaff" opacity="0.9"/>
<circle cx="588.8" cy="261.0" r="2.0" fill="url(#gb)" opacity="0.8"/><circle cx="588.8" cy="261.0" r="0.60" fill="#e8eaff" opacity="0.9"/>
<circle cx="618.7" cy="255.3" r="2.0" fill="url(#gb)" opacity="0.8"/><circle cx="618.7" cy="255.3" r="0.60" fill="#e8eaff" opacity="0.9"/>
<circle cx="663.6" cy="302.0" r="2.6" fill="url(#go)" opacity="0.8"/><circle cx="663.6" cy="302.0" r="0.60" fill="#ffe8d0" opacity="0.9"/>
<circle cx="708.4" cy="302.0" r="2.6" fill="url(#go)" opacity="0.8"/><circle cx="708.4" cy="302.0" r="0.60" fill="#ffe8d0" opacity="0.9"/>
<circle cx="665.5" cy="327.4" r="2.4" fill="url(#gb)" opacity="0.8"/><circle cx="665.5" cy="327.4" r="0.60" fill="#e8eaff" opacity="0.9"/>
<circle cx="668.5" cy="325.0" r="2.0" fill="url(#go)" opacity="0.8"/><circle cx="668.5" cy="325.0" r="0.60" fill="#ffe8d0" opacity="0.9"/>
<circle cx="723.0" cy="367.2" r="3.0" fill="url(#gw)" opacity="0.8"/><circle cx="723.0" cy="367.2" r="0.60" fill="#ffffff" opacity="0.9"/>
<circle cx="808.0" cy="335.8" r="2.0" fill="url(#gb)" opacity="0.8"/><circle cx="808.0" cy="335.8" r="0.60" fill="#e8eaff" opacity="0.9"/>
<circle cx="776.6" cy="289.0" r="2.4" fill="url(#gy)" opacity="0.8"/><circle cx="776.6" cy="289.0" r="0.60" fill="#fff8e0" opacity="0.9"/>
<circle cx="956.8" cy="211.2" r="2.4" fill="url(#gy)" opacity="0.8"/><circle cx="956.8" cy="211.2" r="0.60" fill="#fff8e0" opacity="0.9"/>
<circle cx="901.2" cy="166.0" r="2.4" fill="url(#gy)" opacity="0.8"/><circle cx="901.2" cy="166.0" r="0.60" fill="#fff8e0" opacity="0.9"/>
<circle cx="864.0" cy="162.6" r="2.4" fill="url(#gy)" opacity="0.8"/><circle cx="864.0" cy="162.6" r="0.60" fill="#fff8e0" opacity="0.9"/>
<circle cx="951.0" cy="197.8" r="2.0" fill="url(#go)" opacity="0.8"/><circle cx="951.0" cy="197.8" r="0.60" fill="#ffe8d0" opacity="0.9"/>
<circle cx="946.0" cy="248.4" r="2.0" fill="url(#go)" opacity="0.8"/><circle cx="946.0" cy="248.4" r="0.60" fill="#ffe8d0" opacity="0.9"/>
<circle cx="577.3" cy="174.0" r="2.0" fill="url(#go)" opacity="0.8"/><circle cx="577.3" cy="174.0" r="0.60" fill="#ffe8d0" opacity="0.9"/>
<circle cx="601.0" cy="219.0" r="2.0" fill="url(#go)" opacity="0.8"/><circle cx="601.0" cy="219.0" r="0.60" fill="#ffe8d0" opacity="0.9"/>
<circle cx="567.7" cy="331.2" r="2.0" fill="url(#go)" opacity="0.8"/><circle cx="567.7" cy="331.2" r="0.60" fill="#ffe8d0" opacity="0.9"/>
<circle cx="575.4" cy="331.2" r="2.0" fill="url(#go)" opacity="0.8"/><circle cx="575.4" cy="331.2" r="0.60" fill="#ffe8d0" opacity="0.9"/>
<circle cx="552.4" cy="362.6" r="2.0" fill="url(#go)" opacity="0.8"/><circle cx="552.4" cy="362.6" r="0.60" fill="#ffe8d0" opacity="0.9"/>
<circle cx="726.8" cy="348.0" r="2.4" fill="url(#go)" opacity="0.8"/><circle cx="726.8" cy="348.0" r="0.60" fill="#ffe8d0" opacity="0.9"/>
<circle cx="912.7" cy="305.9" r="2.0" fill="url(#go)" opacity="0.8"/><circle cx="912.7" cy="305.9" r="0.60" fill="#ffe8d0" opacity="0.9"/>
<circle cx="894.7" cy="354.2" r="2.0" fill="url(#gy)" opacity="0.8"/><circle cx="894.7" cy="354.2" r="0.60" fill="#fff8e0" opacity="0.9"/>
<circle cx="869.4" cy="378.0" r="2.0" fill="url(#gb)" opacity="0.8"/><circle cx="869.4" cy="378.0" r="0.60" fill="#e8eaff" opacity="0.9"/>
<circle cx="929.2" cy="379.9" r="2.0" fill="url(#gb)" opacity="0.8"/><circle cx="929.2" cy="379.9" r="0.60" fill="#e8eaff" opacity="0.9"/>
<circle cx="632.9" cy="379.9" r="2.0" fill="url(#gb)" opacity="0.8"/><circle cx="632.9" cy="379.9" r="0.60" fill="#e8eaff" opacity="0.9"/>
<circle cx="755.5" cy="316.6" r="2.0" fill="url(#gb)" opacity="0.8"/><circle cx="755.5" cy="316.6" r="0.60" fill="#e8eaff" opacity="0.9"/>
<circle cx="795.8" cy="317.4" r="2.0" fill="url(#gb)" opacity="0.8"/><circle cx="795.8" cy="317.4" r="0.60" fill="#e8eaff" opacity="0.9"/>
<circle cx="852.5" cy="279.0" r="2.0" fill="url(#gb)" opacity="0.8"/><circle cx="852.5" cy="279.0" r="0.60" fill="#e8eaff" opacity="0.9"/>
<circle cx="624.0" cy="181.7" r="2.0" fill="url(#gb)" opacity="0.8"/><circle cx="624.0" cy="181.7" r="0.60" fill="#e8eaff" opacity="0.9"/>
<circle cx="630.2" cy="183.3" r="2.0" fill="url(#go)" opacity="0.8"/><circle cx="630.2" cy="183.3" r="0.60" fill="#ffe8d0" opacity="0.9"/>
<circle cx="624.5" cy="191.0" r="2.0" fill="url(#gb)" opacity="0.8"/><circle cx="624.5" cy="191.0" r="0.60" fill="#e8eaff" opacity="0.9"/>
<circle cx="629.5" cy="189.4" r="2.0" fill="url(#go)" opacity="0.8"/><circle cx="629.5" cy="189.4" r="0.60" fill="#ffe8d0" opacity="0.9"/>
<circle cx="963.7" cy="224.7" r="2.0" fill="url(#go)" opacity="0.8"/><circle cx="963.7" cy="224.7" r="0.60" fill="#ffe8d0" opacity="0.9"/>
<circle cx="224.6" cy="424.9" r="4.4" fill="url(#go)" opacity="0.8"/><circle cx="224.6" cy="424.9" r="0.88" fill="#ffe8d0" opacity="0.9"/>
<circle cx="324.3" cy="426.8" r="4.4" fill="url(#go)" opacity="0.8"/><circle cx="324.3" cy="426.8" r="0.88" fill="#ffe8d0" opacity="0.9"/>
<circle cx="260.3" cy="409.6" r="2.4" fill="url(#gb)" opacity="0.8"/><circle cx="260.3" cy="409.6" r="0.60" fill="#e8eaff" opacity="0.9"/>
<circle cx="278.3" cy="426.0" r="2.4" fill="url(#gb)" opacity="0.8"/><circle cx="278.3" cy="426.0" r="0.60" fill="#e8eaff" opacity="0.9"/>
<circle cx="96.2" cy="431.4" r="2.6" fill="url(#gb)" opacity="0.8"/><circle cx="96.2" cy="431.4" r="0.60" fill="#e8eaff" opacity="0.9"/>
<circle cx="117.3" cy="482.4" r="2.6" fill="url(#gb)" opacity="0.8"/><circle cx="117.3" cy="482.4" r="0.60" fill="#e8eaff" opacity="0.9"/>
<circle cx="264.9" cy="470.9" r="2.4" fill="url(#gb)" opacity="0.8"/><circle cx="264.9" cy="470.9" r="0.60" fill="#e8eaff" opacity="0.9"/>
<circle cx="399.0" cy="449.8" r="2.6" fill="url(#go)" opacity="0.8"/><circle cx="399.0" cy="449.8" r="0.60" fill="#ffe8d0" opacity="0.9"/>
<circle cx="431.6" cy="480.5" r="3.0" fill="url(#gy)" opacity="0.8"/><circle cx="431.6" cy="480.5" r="0.60" fill="#fff8e0" opacity="0.9"/>
<circle cx="287.1" cy="506.6" r="2.4" fill="url(#go)" opacity="0.8"/><circle cx="287.1" cy="506.6" r="0.60" fill="#ffe8d0" opacity="0.9"/>
<circle cx="328.1" cy="525.7" r="2.4" fill="url(#gb)" opacity="0.8"/><circle cx="328.1" cy="525.7" r="0.60" fill="#e8eaff" opacity="0.9"/>
<circle cx="347.3" cy="557.1" r="2.4" fill="url(#gw)" opacity="0.8"/><circle cx="347.3" cy="557.1" r="0.60" fill="#ffffff" opacity="0.9"/>
<circle cx="234.2" cy="552.5" r="2.6" fill="url(#go)" opacity="0.8"/><circle cx="234.2" cy="552.5" r="0.60" fill="#ffe8d0" opacity="0.9"/>
<circle cx="220.0" cy="566.7" r="2.6" fill="url(#go)" opacity="0.8"/><circle cx="220.0" cy="566.7" r="0.60" fill="#ffe8d0" opacity="0.9"/>
<circle cx="257.2" cy="527.3" r="2.0" fill="url(#gb)" opacity="0.8"/><circle cx="257.2" cy="527.3" r="0.60" fill="#e8eaff" opacity="0.9"/>
<circle cx="217.0" cy="520.7" r="2.0" fill="url(#gb)" opacity="0.8"/><circle cx="217.0" cy="520.7" r="0.60" fill="#e8eaff" opacity="0.9"/>
<circle cx="171.0" cy="534.2" r="2.0" fill="url(#go)" opacity="0.8"/><circle cx="171.0" cy="534.2" r="0.60" fill="#ffe8d0" opacity="0.9"/>
<circle cx="109.7" cy="592.4" r="2.6" fill="url(#gb)" opacity="0.8"/><circle cx="109.7" cy="592.4" r="0.60" fill="#e8eaff" opacity="0.9"/>
<circle cx="165.2" cy="583.2" r="2.4" fill="url(#gy)" opacity="0.8"/><circle cx="165.2" cy="583.2" r="0.60" fill="#fff8e0" opacity="0.9"/>
<circle cx="217.0" cy="610.0" r="2.6" fill="url(#go)" opacity="0.8"/><circle cx="217.0" cy="610.0" r="0.60" fill="#ffe8d0" opacity="0.9"/>
<circle cx="268.7" cy="608.9" r="2.0" fill="url(#gb)" opacity="0.8"/><circle cx="268.7" cy="608.9" r="0.60" fill="#e8eaff" opacity="0.9"/>
<circle cx="312.0" cy="615.4" r="2.0" fill="url(#go)" opacity="0.8"/><circle cx="312.0" cy="615.4" r="0.60" fill="#ffe8d0" opacity="0.9"/>
<circle cx="406.7" cy="608.9" r="2.0" fill="url(#gb)" opacity="0.8"/><circle cx="406.7" cy="608.9" r="0.60" fill="#e8eaff" opacity="0.9"/>
<circle cx="452.7" cy="587.8" r="2.0" fill="url(#gb)" opacity="0.8"/><circle cx="452.7" cy="587.8" r="0.60" fill="#e8eaff" opacity="0.9"/>
<circle cx="425.9" cy="528.4" r="2.4" fill="url(#go)" opacity="0.8"/><circle cx="425.9" cy="528.4" r="0.60" fill="#ffe8d0" opacity="0.9"/>
<circle cx="443.1" cy="534.2" r="2.0" fill="url(#go)" opacity="0.8"/><circle cx="443.1" cy="534.2" r="0.60" fill="#ffe8d0" opacity="0.9"/>
<circle cx="437.4" cy="409.6" r="2.4" fill="url(#go)" opacity="0.8"/><circle cx="437.4" cy="409.6" r="0.60" fill="#ffe8d0" opacity="0.9"/>
<circle cx="470.0" cy="410.7" r="2.4" fill="url(#go)" opacity="0.8"/><circle cx="470.0" cy="410.7" r="0.60" fill="#ffe8d0" opacity="0.9"/>
<circle cx="456.5" cy="453.7" r="2.0" fill="url(#go)" opacity="0.8"/><circle cx="456.5" cy="453.7" r="0.60" fill="#ffe8d0" opacity="0.9"/>
<circle cx="97.4" cy="605.0" r="2.0" fill="url(#gb)" opacity="0.8"/><circle cx="97.4" cy="605.0" r="0.60" fill="#e8eaff" opacity="0.9"/>
<circle cx="75.2" cy="645.3" r="2.6" fill="url(#gb)" opacity="0.8"/><circle cx="75.2" cy="645.3" r="0.60" fill="#e8eaff" opacity="0.9"/>
<circle cx="140.3" cy="622.3" r="2.0" fill="url(#go)" opacity="0.8"/><circle cx="140.3" cy="622.3" r="0.60" fill="#ffe8d0" opacity="0.9"/>
<circle cx="292.9" cy="631.9" r="2.0" fill="url(#gb)" opacity="0.8"/><circle cx="292.9" cy="631.9" r="0.60" fill="#e8eaff" opacity="0.9"/>
<circle cx="741.4" cy="475.9" r="5.0" fill="url(#gw)" opacity="0.8"/><circle cx="741.4" cy="475.9" r="1.00" fill="#ffffff" opacity="0.9"/>
<circle cx="538.2" cy="445.2" r="4.0" fill="url(#go)" opacity="0.8"/><circle cx="538.2" cy="445.2" r="0.80" fill="#ffe8d0" opacity="0.9"/>
<circle cx="824.5" cy="610.0" r="5.0" fill="url(#gb)" opacity="0.8"/><circle cx="824.5" cy="610.0" r="1.00" fill="#e8eaff" opacity="0.9"/>
<circle cx="779.7" cy="610.8" r="4.0" fill="url(#go)" opacity="0.8"/><circle cx="779.7" cy="610.8" r="0.80" fill="#ffe8d0" opacity="0.9"/>
<circle cx="847.5" cy="530.3" r="3.6" fill="url(#gb)" opacity="0.8"/><circle cx="847.5" cy="530.3" r="0.72" fill="#e8eaff" opacity="0.9"/>
<circle cx="632.9" cy="608.9" r="3.0" fill="url(#go)" opacity="0.8"/><circle cx="632.9" cy="608.9" r="0.60" fill="#ffe8d0" opacity="0.9"/>
<circle cx="767.0" cy="450.8" r="2.4" fill="url(#gb)" opacity="0.8"/><circle cx="767.0" cy="450.8" r="0.60" fill="#e8eaff" opacity="0.9"/>
<circle cx="787.4" cy="492.0" r="2.4" fill="url(#gb)" opacity="0.8"/><circle cx="787.4" cy="492.0" r="0.60" fill="#e8eaff" opacity="0.9"/>
<circle cx="822.6" cy="492.0" r="2.0" fill="url(#gb)" opacity="0.8"/><circle cx="822.6" cy="492.0" r="0.60" fill="#e8eaff" opacity="0.9"/>
<circle cx="862.9" cy="493.9" r="2.4" fill="url(#gb)" opacity="0.8"/><circle cx="862.9" cy="493.9" r="0.60" fill="#e8eaff" opacity="0.9"/>
<circle cx="939.5" cy="633.0" r="2.6" fill="url(#go)" opacity="0.8"/><circle cx="939.5" cy="633.0" r="0.60" fill="#ffe8d0" opacity="0.9"/>
<circle cx="962.5" cy="433.7" r="2.4" fill="url(#go)" opacity="0.8"/><circle cx="962.5" cy="433.7" r="0.60" fill="#ffe8d0" opacity="0.9"/>
<circle cx="953.0" cy="446.8" r="2.0" fill="url(#go)" opacity="0.8"/><circle cx="953.0" cy="446.8" r="0.60" fill="#ffe8d0" opacity="0.9"/>
<circle cx="926.0" cy="427.6" r="2.4" fill="url(#go)" opacity="0.8"/><circle cx="926.0" cy="427.6" r="0.60" fill="#ffe8d0" opacity="0.9"/>
<circle cx="891.6" cy="403.0" r="2.4" fill="url(#gy)" opacity="0.8"/><circle cx="891.6" cy="403.0" r="0.60" fill="#fff8e0" opacity="0.9"/>
<circle cx="795.8" cy="584.0" r="2.4" fill="url(#gy)" opacity="0.8"/><circle cx="795.8" cy="584.0" r="0.60" fill="#fff8e0" opacity="0.9"/>
<circle cx="815.0" cy="564.8" r="2.0" fill="url(#gy)" opacity="0.8"/><circle cx="815.0" cy="564.8" r="0.60" fill="#fff8e0" opacity="0.9"/>
<circle cx="706.9" cy="414.6" r="2.0" fill="url(#go)" opacity="0.8"/><circle cx="706.9" cy="414.6" r="0.60" fill="#ffe8d0" opacity="0.9"/>
<circle cx="681.6" cy="412.3" r="2.0" fill="url(#go)" opacity="0.8"/><circle cx="681.6" cy="412.3" r="0.60" fill="#ffe8d0" opacity="0.9"/>
<circle cx="747.9" cy="498.9" r="2.0" fill="url(#gy)" opacity="0.8"/><circle cx="747.9" cy="498.9" r="0.60" fill="#fff8e0" opacity="0.9"/>
<circle cx="753.6" cy="500.4" r="2.0" fill="url(#gb)" opacity="0.8"/><circle cx="753.6" cy="500.4" r="0.60" fill="#e8eaff" opacity="0.9"/>
<circle cx="926.0" cy="492.0" r="2.0" fill="url(#go)" opacity="0.8"/><circle cx="926.0" cy="492.0" r="0.60" fill="#ffe8d0" opacity="0.9"/>
<circle cx="933.0" cy="492.8" r="2.0" fill="url(#go)" opacity="0.8"/><circle cx="933.0" cy="492.8" r="0.60" fill="#ffe8d0" opacity="0.9"/>
<circle cx="740.2" cy="603.0" r="2.0" fill="url(#go)" opacity="0.8"/><circle cx="740.2" cy="603.0" r="0.60" fill="#ffe8d0" opacity="0.9"/>
<circle cx="636.7" cy="618.5" r="2.0" fill="url(#gb)" opacity="0.8"/><circle cx="636.7" cy="618.5" r="0.60" fill="#e8eaff" opacity="0.9"/>
<circle cx="663.6" cy="625.4" r="2.0" fill="url(#go)" opacity="0.8"/><circle cx="663.6" cy="625.4" r="0.60" fill="#ffe8d0" opacity="0.9"/>
<circle cx="699.2" cy="552.5" r="2.0" fill="url(#gb)" opacity="0.8"/><circle cx="699.2" cy="552.5" r="0.60" fill="#e8eaff" opacity="0.9"/>
<circle cx="82.0" cy="852.7" r="4.4" fill="url(#gb)" opacity="0.8"/><circle cx="82.0" cy="852.7" r="0.88" fill="#e8eaff" opacity="0.9"/>
<circle cx="126.9" cy="770.3" r="3.6" fill="url(#gw)" opacity="0.8"/><circle cx="126.9" cy="770.3" r="0.72" fill="#ffffff" opacity="0.9"/>
<circle cx="151.8" cy="781.0" r="3.0" fill="url(#gy)" opacity="0.8"/><circle cx="151.8" cy="781.0" r="0.60" fill="#fff8e0" opacity="0.9"/>
<circle cx="90.5" cy="775.0" r="2.4" fill="url(#gb)" opacity="0.8"/><circle cx="90.5" cy="775.0" r="0.60" fill="#e8eaff" opacity="0.9"/>
<circle cx="137.6" cy="730.0" r="3.0" fill="url(#gb)" opacity="0.8"/><circle cx="137.6" cy="730.0" r="0.60" fill="#e8eaff" opacity="0.9"/>
<circle cx="186.3" cy="755.0" r="2.6" fill="url(#go)" opacity="0.8"/><circle cx="186.3" cy="755.0" r="0.60" fill="#ffe8d0" opacity="0.9"/>
<circle cx="310.9" cy="755.0" r="3.0" fill="url(#gb)" opacity="0.8"/><circle cx="310.9" cy="755.0" r="0.60" fill="#e8eaff" opacity="0.9"/>
<circle cx="242.7" cy="866.0" r="3.0" fill="url(#gb)" opacity="0.8"/><circle cx="242.7" cy="866.0" r="0.60" fill="#e8eaff" opacity="0.9"/>
<circle cx="435.5" cy="705.2" r="3.0" fill="url(#gw)" opacity="0.8"/><circle cx="435.5" cy="705.2" r="0.60" fill="#ffffff" opacity="0.9"/>
<circle cx="447.0" cy="871.9" r="2.6" fill="url(#gw)" opacity="0.8"/><circle cx="447.0" cy="871.9" r="0.60" fill="#ffffff" opacity="0.9"/>
<circle cx="452.7" cy="686.0" r="2.4" fill="url(#go)" opacity="0.8"/><circle cx="452.7" cy="686.0" r="0.60" fill="#ffe8d0" opacity="0.9"/>
<circle cx="359.6" cy="651.5" r="2.4" fill="url(#gw)" opacity="0.8"/><circle cx="359.6" cy="651.5" r="0.60" fill="#ffffff" opacity="0.9"/>
<circle cx="167.9" cy="668.7" r="2.4" fill="url(#go)" opacity="0.8"/><circle cx="167.9" cy="668.7" r="0.60" fill="#ffe8d0" opacity="0.9"/>
<circle cx="148.8" cy="815.5" r="2.4" fill="url(#gy)" opacity="0.8"/><circle cx="148.8" cy="815.5" r="0.60" fill="#fff8e0" opacity="0.9"/>
<circle cx="130.7" cy="817.0" r="2.0" fill="url(#go)" opacity="0.8"/><circle cx="130.7" cy="817.0" r="0.60" fill="#ffe8d0" opacity="0.9"/>
<circle cx="272.6" cy="759.6" r="2.0" fill="url(#go)" opacity="0.8"/><circle cx="272.6" cy="759.6" r="0.60" fill="#ffe8d0" opacity="0.9"/>
<circle cx="305.0" cy="763.4" r="2.0" fill="url(#go)" opacity="0.8"/><circle cx="305.0" cy="763.4" r="0.60" fill="#ffe8d0" opacity="0.9"/>
<circle cx="364.5" cy="741.6" r="2.0" fill="url(#gb)" opacity="0.8"/><circle cx="364.5" cy="741.6" r="0.60" fill="#e8eaff" opacity="0.9"/>
<circle cx="355.0" cy="734.0" r="2.0" fill="url(#go)" opacity="0.8"/><circle cx="355.0" cy="734.0" r="0.60" fill="#ffe8d0" opacity="0.9"/>
<circle cx="369.5" cy="734.0" r="2.0" fill="url(#go)" opacity="0.8"/><circle cx="369.5" cy="734.0" r="0.60" fill="#ffe8d0" opacity="0.9"/>
<circle cx="371.0" cy="794.0" r="2.0" fill="url(#go)" opacity="0.8"/><circle cx="371.0" cy="794.0" r="0.60" fill="#ffe8d0" opacity="0.9"/>
<circle cx="111.6" cy="701.3" r="2.0" fill="url(#gb)" opacity="0.8"/><circle cx="111.6" cy="701.3" r="0.60" fill="#e8eaff" opacity="0.9"/>
<circle cx="115.4" cy="711.0" r="2.0" fill="url(#gb)" opacity="0.8"/><circle cx="115.4" cy="711.0" r="0.60" fill="#e8eaff" opacity="0.9"/>
<circle cx="259.1" cy="860.4" r="2.0" fill="url(#go)" opacity="0.8"/><circle cx="259.1" cy="860.4" r="0.60" fill="#ffe8d0" opacity="0.9"/>
<circle cx="598.4" cy="750.4" r="6.0" fill="url(#gb)" opacity="0.8"/><circle cx="598.4" cy="750.4" r="1.20" fill="#e8eaff" opacity="0.9"/>
<circle cx="921.1" cy="718.6" r="4.4" fill="url(#gb)" opacity="0.8"/><circle cx="921.1" cy="718.6" r="0.88" fill="#e8eaff" opacity="0.9"/>
<circle cx="801.5" cy="720.5" r="3.6" fill="url(#go)" opacity="0.8"/><circle cx="801.5" cy="720.5" r="0.72" fill="#ffe8d0" opacity="0.9"/>
<circle cx="677.0" cy="761.9" r="2.6" fill="url(#gb)" opacity="0.8"/><circle cx="677.0" cy="761.9" r="0.60" fill="#e8eaff" opacity="0.9"/>
<circle cx="772.8" cy="647.7" r="2.6" fill="url(#gb)" opacity="0.8"/><circle cx="772.8" cy="647.7" r="0.60" fill="#e8eaff" opacity="0.9"/>
<circle cx="556.2" cy="651.5" r="2.6" fill="url(#go)" opacity="0.8"/><circle cx="556.2" cy="651.5" r="0.60" fill="#ffe8d0" opacity="0.9"/>
<circle cx="596.5" cy="659.2" r="2.4" fill="url(#gy)" opacity="0.8"/><circle cx="596.5" cy="659.2" r="0.60" fill="#fff8e0" opacity="0.9"/>
<circle cx="620.3" cy="721.3" r="2.4" fill="url(#gb)" opacity="0.8"/><circle cx="620.3" cy="721.3" r="0.60" fill="#e8eaff" opacity="0.9"/>
<circle cx="536.0" cy="738.1" r="2.4" fill="url(#gb)" opacity="0.8"/><circle cx="536.0" cy="738.1" r="0.60" fill="#e8eaff" opacity="0.9"/>
<circle cx="598.4" cy="789.5" r="2.6" fill="url(#gw)" opacity="0.8"/><circle cx="598.4" cy="789.5" r="0.60" fill="#ffffff" opacity="0.9"/>
<circle cx="864.8" cy="787.6" r="2.6" fill="url(#gw)" opacity="0.8"/><circle cx="864.8" cy="787.6" r="0.60" fill="#ffffff" opacity="0.9"/>
<circle cx="742.9" cy="708.2" r="2.0" fill="url(#gw)" opacity="0.8"/><circle cx="742.9" cy="708.2" r="0.60" fill="#ffffff" opacity="0.9"/>
<circle cx="710.7" cy="866.1" r="2.6" fill="url(#gy)" opacity="0.8"/><circle cx="710.7" cy="866.1" r="0.60" fill="#fff8e0" opacity="0.9"/>
<circle cx="787.4" cy="863.0" r="2.4" fill="url(#go)" opacity="0.8"/><circle cx="787.4" cy="863.0" r="0.60" fill="#ffe8d0" opacity="0.9"/>
<circle cx="887.0" cy="720.5" r="2.4" fill="url(#go)" opacity="0.8"/><circle cx="887.0" cy="720.5" r="0.60" fill="#ffe8d0" opacity="0.9"/>
<circle cx="892.4" cy="744.3" r="2.0" fill="url(#go)" opacity="0.8"/><circle cx="892.4" cy="744.3" r="0.60" fill="#ffe8d0" opacity="0.9"/>
<circle cx="930.7" cy="752.0" r="2.0" fill="url(#go)" opacity="0.8"/><circle cx="930.7" cy="752.0" r="0.60" fill="#ffe8d0" opacity="0.9"/>
<circle cx="888.6" cy="801.7" r="2.4" fill="url(#gy)" opacity="0.8"/><circle cx="888.6" cy="801.7" r="0.60" fill="#fff8e0" opacity="0.9"/>
<circle cx="959.8" cy="818.2" r="2.0" fill="url(#gb)" opacity="0.8"/><circle cx="959.8" cy="818.2" r="0.60" fill="#e8eaff" opacity="0.9"/>
<circle cx="943.4" cy="839.3" r="2.0" fill="url(#gb)" opacity="0.8"/><circle cx="943.4" cy="839.3" r="0.60" fill="#e8eaff" opacity="0.9"/>
<circle cx="557.4" cy="724.3" r="2.0" fill="url(#gy)" opacity="0.8"/><circle cx="557.4" cy="724.3" r="0.60" fill="#fff8e0" opacity="0.9"/>
<circle cx="573.5" cy="691.7" r="2.0" fill="url(#go)" opacity="0.8"/><circle cx="573.5" cy="691.7" r="0.60" fill="#ffe8d0" opacity="0.9"/>
<circle cx="604.9" cy="850.0" r="2.0" fill="url(#gb)" opacity="0.8"/><circle cx="604.9" cy="850.0" r="0.60" fill="#e8eaff" opacity="0.9"/>
<circle cx="596.5" cy="850.0" r="2.0" fill="url(#gb)" opacity="0.8"/><circle cx="596.5" cy="850.0" r="0.60" fill="#e8eaff" opacity="0.9"/>
<circle cx="545.9" cy="871.9" r="2.0" fill="url(#go)" opacity="0.8"/><circle cx="545.9" cy="871.9" r="0.60" fill="#ffe8d0" opacity="0.9"/>
<circle cx="86.0" cy="675.0" r="4.0" fill="url(#gb)" opacity="0.8"/><circle cx="86.0" cy="675.0" r="0.80" fill="#e8eaff" opacity="0.9"/>
</g>
<rect x="187.5" y="400.5" width="3.5" height="3.5" rx="1.2" fill="#fff"/><rect x="539.5" y="335.5" width="3" height="2.5" rx="1" fill="#fff"/>
<path d="M589.4 750.4 H607.4 M598.4 741.4 V759.4" stroke="#c0c8ff" stroke-width="0.7" opacity="0.3"/>
<path d="M734.4 475.9 H748.4 M741.4 468.9 V482.9" stroke="#e0e0ff" stroke-width="0.7" opacity="0.3"/>
<path d="M818.5 610 H830.5 M824.5 604 V616" stroke="#b0b8ff" stroke-width="0.7" opacity="0.3"/>
<path d="M478.5 501.7 H496.5 M487.5 492.7 V510.7" stroke="#fff0c0" stroke-width="0.7" opacity="0.3"/>
<path d="M916.1 718.6 H926.1 M921.1 713.6 V723.6" stroke="#b0b8ff" stroke-width="0.7" opacity="0.3"/>
<path d="M511.20000000000005 550.7 H525.2 M518.2 543.7 V557.7" stroke="#c0c8ff" stroke-width="0.7" opacity="0.3"/>
<ellipse cx="536.4" cy="916.9" rx="823.5" ry="579.9" fill="none" stroke="#26564f" stroke-width="1"/>
<ellipse cx="514.9" cy="785.2" rx="678.1" ry="437.0" fill="none" stroke="#26564f" stroke-width="1"/>
<ellipse cx="538.1" cy="788.2" rx="564.5" ry="395.0" fill="none" stroke="#26564f" stroke-width="1"/>
<path d="M183 641 A337 217 0 0 1 857 641 A337 242 0 0 1 183 641" fill="none" stroke="#26564f" stroke-width="1"/>
<ellipse cx="513" cy="527.5" rx="96" ry="48.5" fill="none" stroke="#26564f" stroke-width="1"/>
<ellipse cx="518.5" cy="519" rx="62.5" ry="32" fill="none" stroke="#26564f" stroke-width="1"/>
<ellipse cx="517.5" cy="516.9" rx="45.4" ry="20.6" fill="none" stroke="#26564f" stroke-width="1"/>
<ellipse cx="521.9" cy="516.4" rx="24" ry="10.6" fill="none" stroke="#26564f" stroke-width="1"/>
<circle cx="517" cy="515.4" r="19" fill="url(#sun)" opacity="0.88"/>
<circle cx="487.5" cy="501.7" r="8" fill="url(#gy)"/><circle cx="487.5" cy="501.7" r="1.8" fill="#fff"/>
<circle cx="539.2" cy="525.8" r="3" fill="url(#gy)"/><circle cx="539.2" cy="525.8" r="0.9" fill="#fff"/>
<circle cx="518.2" cy="550.7" r="7" fill="url(#gb)"/><circle cx="518.2" cy="550.7" r="1.6" fill="#eef"/>
<path d="M511 399 L533 388" stroke="#c8b090" stroke-width="1.3" stroke-dasharray="4 2"/><ellipse cx="521.6" cy="393.7" rx="5.4" ry="5" fill="#d8c49a"/><path d="M517 395 L526 391" stroke="#f0e8d0" stroke-width="1.2"/>
<g clip-path="url(#jc)"><rect x="190" y="555" width="25" height="34" fill="#b8a07a"/><path d="M190 566 L215 558" stroke="#c4ae8a" stroke-width="4"/><path d="M190 573 L215 563" stroke="#cfc6b4" stroke-width="2.5"/><path d="M190 576.5 L215 567" stroke="#a4725a" stroke-width="1.8"/><path d="M190 580 L215 571" stroke="#d2ccbe" stroke-width="2.5"/><path d="M190 583.5 L215 575" stroke="#a88470" stroke-width="1.3"/><path d="M190 587 L215 579" stroke="#cdc4b0" stroke-width="2.5"/></g>
</svg>
<div class="a" style="left:532px;top:386px;font-size:14px;line-height:14px;font-weight:bold;color:#f4f4f4;white-space:nowrap;text-shadow:0 0 1px #000,1px 1px 1px #000">土星</div>
<div class="a" style="left:532px;top:507px;font-size:14px;line-height:14px;font-weight:bold;color:#f4f4f4;white-space:nowrap;text-shadow:0 0 1px #000,1px 1px 1px #000">太陽</div>
<div class="a" style="left:528px;top:543px;font-size:14px;line-height:14px;font-weight:bold;color:#f4f4f4;white-space:nowrap;text-shadow:0 0 1px #000,1px 1px 1px #000">地球</div>
<div class="a" style="left:841px;top:859px;font-size:17px;line-height:17px;font-weight:bold;color:#a4a4a4;white-space:nowrap;letter-spacing:-0.2px;-webkit-text-stroke:0.4px #a4a4a4">©アストロアーツ</div>
<div class="a" style="left:70px;top:317px;width:34px;height:35px;background:#0a3a33;border-radius:2px"><div class="a" style="left:5px;top:6px;font-size:12px;line-height:12px;color:#62bcaa">視野</div><div class="a mono" style="left:0px;top:23px;font-size:11px;line-height:11px;color:#62bcaa;letter-spacing:0.2px;-webkit-text-stroke:0.3px #62bcaa">120.0</div></div>
<div class="a" style="left:70px;top:363px;width:34px;height:35px;background:#0a3a33;border-radius:2px"><svg class="a" style="left:10px;top:10px" width="13" height="11"><path d="M0 11 H13 L6.5 0Z" fill="#6cc0b0"/></svg></div>
<div class="a" style="left:84px;top:413px;width:6px;height:212px;background:#0a4a40"></div>
<div class="a" style="left:84px;top:474px;width:6px;height:1px;background:#031a16"></div>
<div class="a" style="left:84px;top:536px;width:6px;height:1px;background:#031a16"></div>
<div class="a" style="left:84px;top:598px;width:6px;height:1px;background:#031a16"></div>
<div class="a" style="left:84px;top:625px;width:6px;height:35px;background:#4a9a8c"></div>
<svg class="a" style="left:68px;top:616px" width="38" height="16"><path d="M0 0 H7 L14 8 L7 16 H0Z" fill="#3a8a7c"/><path d="M3 2 V14 M5 2 V14" stroke="#0a2a26" stroke-width="1"/><path d="M38 0 H31 L24 8 L31 16 H38Z" fill="#3a8a7c"/><path d="M33 2 V14 M35 2 V14" stroke="#0a2a26" stroke-width="1"/></svg>
<div class="a" style="left:70px;top:680px;width:34px;height:35px;background:#0a3a33;border-radius:3px;overflow:hidden"><div class="a" style="left:0;top:0;width:34px;height:20px;background:radial-gradient(ellipse at 50% 0,#3a7a88 0,rgba(10,58,51,0) 70%)"></div><svg class="a" style="left:10px;top:13px" width="13" height="11"><path d="M0 0 H13 L6.5 11Z" fill="#6cc0b0"/></svg></div>
<!--/SKY-->
<div id="vscroll" class="a"></div>
<div id="hscroll" class="a"></div>
<div id="rpanel" class="a"></div>
<!--RP-->
<div class="a" style="left:977px;top:148px;width:1px;height:732px;background:#3a3a3a"></div>
<div class="a" style="left:993px;top:148px;width:1px;height:732px;background:#3a3a3a"></div>
<div class="a" style="left:994px;top:148px;width:1px;height:751px;background:#050505"></div>
<div class="a" style="left:978px;top:150px;width:15px;height:16px;background:#262626;border:1px solid #0a0a0a;box-shadow:inset 0 0 0 1px #4a4a4a"><svg class="a" style="left:3px;top:5px" width="9" height="5"><path d="M0 5 H9 L4.5 0Z" fill="#bbb"/></svg></div>
<div class="a" style="left:978px;top:865px;width:15px;height:15px;background:#262626;border:1px solid #0a0a0a;box-shadow:inset 0 0 0 1px #4a4a4a"><svg class="a" style="left:3px;top:5px" width="9" height="5"><path d="M0 0 H9 L4.5 5Z" fill="#bbb"/></svg></div>
<div class="a" style="left:978px;top:393px;width:15px;height:17px;background:#404040;border:1px solid #0c0c0c;box-shadow:inset 0 0 0 1px #5a5a5a"></div>
<div class="a" style="left:58px;top:882px;width:15px;height:15px;background:#262626;border:1px solid #0a0a0a;box-shadow:inset 0 0 0 1px #4a4a4a"><svg class="a" style="left:4px;top:3px" width="6" height="9"><path d="M6 0 V9 L0 4.5Z" fill="#bbb"/></svg></div>
<div class="a" style="left:961px;top:882px;width:15px;height:15px;background:#262626;border:1px solid #0a0a0a;box-shadow:inset 0 0 0 1px #4a4a4a"><svg class="a" style="left:5px;top:3px" width="6" height="9"><path d="M0 0 V9 L6 4.5Z" fill="#bbb"/></svg></div>
<div class="a" style="left:930px;top:883px;width:16px;height:14px;background:#404040;border:1px solid #0c0c0c;box-shadow:inset 0 0 0 1px #5a5a5a"></div>
<div class="a" style="left:995px;top:149px;width:204px;height:2px;background:#6a7488"></div>
<div class="a" style="left:1002px;top:157px;font-size:12px;line-height:12px;color:#dde3ee;white-space:pre;font-weight:bold">今日の暦</div>
<div class="a" style="left:995px;top:174px;width:204px;height:2px;background:#6a7488"></div>
<div class="a" style="left:995px;top:178px;width:204px;height:16px;background:linear-gradient(90deg,#5e5e5e,#3a3a3a 60%,#2c2c2c)"></div>
<div class="a" style="left:1002px;top:180px;font-size:12px;line-height:12px;color:#e6e6e6;white-space:pre;letter-spacing:-0.45px">2026年03月26日(木)</div>
<div class="a" style="left:1007px;top:205px;width:172px;height:127px;background:#555"></div>
<div class="a" style="left:1007px;top:205px;width:172px;height:19px;background:#4a4a4a;border:1px solid #687080;border-bottom:1px solid #3a3a3a"></div>
<svg class="a" style="left:1012px;top:209px" width="24" height="11"><path d="M6 0 V11 L0 5.5Z M12 0 V11 L6 5.5Z M23 0 V11 L17 5.5Z" fill="#dde"/></svg>
<svg class="a" style="left:1147px;top:209px" width="24" height="11"><path d="M1 0 V11 L7 5.5Z M12 0 V11 L18 5.5Z M18 0 V11 L24 5.5Z" fill="#dde"/></svg>
<div class="a" style="left:1056px;top:208px;font-size:13px;line-height:13px;color:#d8e0f0;white-space:pre;font-weight:bold;letter-spacing:0.3px">2026年3月</div>
<svg class="a" style="left:1065px;top:229px" width="16" height="16"><circle cx="8" cy="8" r="8" fill="#c9b040"/></svg>
<svg class="a" style="left:1085px;top:245px" width="16" height="16"><circle cx="8" cy="8" r="8" fill="#0a0a0a"/><path d="M8 0 A8 8 0 0 0 8 16Z" fill="#c9b040"/></svg>
<svg class="a" style="left:1107px;top:261px" width="16" height="16"><circle cx="8" cy="8" r="8" fill="#0a0a0a"/></svg>
<svg class="a" style="left:1106px;top:277px" width="16" height="16"><circle cx="8" cy="8" r="8" fill="#0a0a0a"/><path d="M8 0 A8 8 0 0 1 8 16Z" fill="#c9b040"/></svg>
<div class="a" style="left:1104px;top:277px;width:21px;height:16px;border:1px solid #e01010"></div>
<div class="a" style="left:1008px;top:231px;width:30px;text-align:right;font-size:12.5px;line-height:12px;color:#e8e8e8">1</div>
<div class="a" style="left:1029px;top:231px;width:30px;text-align:right;font-size:12.5px;line-height:12px;color:#e8e8e8">2</div>
<div class="a" style="left:1050px;top:231px;width:30px;text-align:right;font-size:12.5px;line-height:12px;color:#e8e8e8">3</div>
<div class="a" style="left:1071px;top:231px;width:30px;text-align:right;font-size:12.5px;line-height:12px;color:#e8e8e8">4</div>
<div class="a" style="left:1092px;top:231px;width:30px;text-align:right;font-size:12.5px;line-height:12px;color:#e8e8e8">5</div>
<div class="a" style="left:1113px;top:231px;width:30px;text-align:right;font-size:12.5px;line-height:12px;color:#e8e8e8">6</div>
<div class="a" style="left:1134px;top:231px;width:30px;text-align:right;font-size:12.5px;line-height:12px;color:#e8e8e8">7</div>
<div class="a" style="left:1008px;top:247px;width:30px;text-align:right;font-size:12.5px;line-height:12px;color:#e8e8e8">8</div>
<div class="a" style="left:1029px;top:247px;width:30px;text-align:right;font-size:12.5px;line-height:12px;color:#e8e8e8">9</div>
<div class="a" style="left:1050px;top:247px;width:30px;text-align:right;font-size:12.5px;line-height:12px;color:#e8e8e8">10</div>
<div class="a" style="left:1071px;top:247px;width:30px;text-align:right;font-size:12.5px;line-height:12px;color:#e8e8e8">11</div>
<div class="a" style="left:1092px;top:247px;width:30px;text-align:right;font-size:12.5px;line-height:12px;color:#e8e8e8">12</div>
<div class="a" style="left:1113px;top:247px;width:30px;text-align:right;font-size:12.5px;line-height:12px;color:#e8e8e8">13</div>
<div class="a" style="left:1134px;top:247px;width:30px;text-align:right;font-size:12.5px;line-height:12px;color:#e8e8e8">14</div>
<div class="a" style="left:1008px;top:263px;width:30px;text-align:right;font-size:12.5px;line-height:12px;color:#e8e8e8">15</div>
<div class="a" style="left:1029px;top:263px;width:30px;text-align:right;font-size:12.5px;line-height:12px;color:#e8e8e8">16</div>
<div class="a" style="left:1050px;top:263px;width:30px;text-align:right;font-size:12.5px;line-height:12px;color:#e8e8e8">17</div>
<div class="a" style="left:1071px;top:263px;width:30px;text-align:right;font-size:12.5px;line-height:12px;color:#e8e8e8">18</div>
<div class="a" style="left:1092px;top:263px;width:30px;text-align:right;font-size:12.5px;line-height:12px;color:#e8e8e8">19</div>
<div class="a" style="left:1113px;top:263px;width:30px;text-align:right;font-size:12.5px;line-height:12px;color:#e8e8e8">20</div>
<div class="a" style="left:1134px;top:263px;width:30px;text-align:right;font-size:12.5px;line-height:12px;color:#e8e8e8">21</div>
<div class="a" style="left:1008px;top:279px;width:30px;text-align:right;font-size:12.5px;line-height:12px;color:#e8e8e8">22</div>
<div class="a" style="left:1029px;top:279px;width:30px;text-align:right;font-size:12.5px;line-height:12px;color:#e8e8e8">23</div>
<div class="a" style="left:1050px;top:279px;width:30px;text-align:right;font-size:12.5px;line-height:12px;color:#e8e8e8">24</div>
<div class="a" style="left:1071px;top:279px;width:30px;text-align:right;font-size:12.5px;line-height:12px;color:#e8e8e8">25</div>
<div class="a" style="left:1092px;top:279px;width:30px;text-align:right;font-size:12.5px;line-height:12px;color:#e8e8e8">26</div>
<div class="a" style="left:1113px;top:279px;width:30px;text-align:right;font-size:12.5px;line-height:12px;color:#e8e8e8">27</div>
<div class="a" style="left:1134px;top:279px;width:30px;text-align:right;font-size:12.5px;line-height:12px;color:#e8e8e8">28</div>
<div class="a" style="left:1008px;top:295px;width:30px;text-align:right;font-size:12.5px;line-height:12px;color:#e8e8e8">29</div>
<div class="a" style="left:1029px;top:295px;width:30px;text-align:right;font-size:12.5px;line-height:12px;color:#e8e8e8">30</div>
<div class="a" style="left:1050px;top:295px;width:30px;text-align:right;font-size:12.5px;line-height:12px;color:#e8e8e8">31</div>
<div class="a" style="left:1071px;top:295px;width:30px;text-align:right;font-size:12.5px;line-height:12px;color:#7c7c7c">1</div>
<div class="a" style="left:1092px;top:295px;width:30px;text-align:right;font-size:12.5px;line-height:12px;color:#7c7c7c">2</div>
<div class="a" style="left:1113px;top:295px;width:30px;text-align:right;font-size:12.5px;line-height:12px;color:#7c7c7c">3</div>
<div class="a" style="left:1134px;top:295px;width:30px;text-align:right;font-size:12.5px;line-height:12px;color:#7c7c7c">4</div>
<div class="a" style="left:1008px;top:311px;width:30px;text-align:right;font-size:12.5px;line-height:12px;color:#7c7c7c">5</div>
<div class="a" style="left:1029px;top:311px;width:30px;text-align:right;font-size:12.5px;line-height:12px;color:#7c7c7c">6</div>
<div class="a" style="left:1050px;top:311px;width:30px;text-align:right;font-size:12.5px;line-height:12px;color:#7c7c7c">7</div>
<div class="a" style="left:1071px;top:311px;width:30px;text-align:right;font-size:12.5px;line-height:12px;color:#7c7c7c">8</div>
<div class="a" style="left:1092px;top:311px;width:30px;text-align:right;font-size:12.5px;line-height:12px;color:#7c7c7c">9</div>
<div class="a" style="left:1113px;top:311px;width:30px;text-align:right;font-size:12.5px;line-height:12px;color:#7c7c7c">10</div>
<div class="a" style="left:1134px;top:311px;width:30px;text-align:right;font-size:12.5px;line-height:12px;color:#7c7c7c">11</div>
<div class="a" style="left:1007px;top:332px;width:172px;height:3px;background:#2a2a2a"></div>
<div class="a" style="left:1007px;top:341px;width:184px;height:15px;background:linear-gradient(90deg,#505050,#363636 32%,#383838 55%,#5a5a5a);border:1px solid #0c0c0c"><div class="a" style="left:0;top:1px;width:182px;text-align:center;font-size:12px;line-height:12px;color:#eee">薄明</div></div>
<div class="a" style="left:1027px;top:358px;font-size:13px;line-height:13px;color:#e2e2e2;white-space:pre;letter-spacing:-1px">開始</div>
<div class="a" style="left:1058px;top:358px;font-size:11px;line-height:11px;color:#e2e2e2;white-space:pre;text-decoration:underline;letter-spacing:-0.6px">04:11</div>
<div class="a" style="left:1102px;top:358px;font-size:13px;line-height:13px;color:#e2e2e2;white-space:pre;letter-spacing:-1px">終了</div>
<div class="a" style="left:1133px;top:358px;font-size:11px;line-height:11px;color:#e2e2e2;white-space:pre;text-decoration:underline;letter-spacing:-0.6px">19:23</div>
<div class="a" style="left:1007px;top:378px;width:184px;height:15px;background:linear-gradient(90deg,#505050,#363636 32%,#383838 55%,#5a5a5a);border:1px solid #0c0c0c"><div class="a" style="left:0;top:1px;width:182px;text-align:center;font-size:12px;line-height:12px;color:#eee">出･南中･没</div></div>
<div class="a" style="left:1008px;top:396px;width:13px;height:13px;background:#2a2a2a;border:1px solid #111;box-shadow:inset 0 0 0 1px #4a4a4a"></div>
<div class="a" style="left:1025px;top:397px;font-size:13px;line-height:13px;color:#e0e0e0;white-space:pre;letter-spacing:-1.5px">惑星の出没時刻を表示</div>
<div class="a" style="left:1012px;top:416px;font-size:13px;line-height:13px;color:#e2e2e2;white-space:pre;letter-spacing:-1px">太陽</div>
<div class="a" style="left:1069px;top:417px;font-size:11px;line-height:11px;color:#e0e0e0;white-space:pre;letter-spacing:-0.6px">05:37</div>
<div class="a" style="left:1112px;top:417px;font-size:11px;line-height:11px;color:#e0e0e0;white-space:pre;letter-spacing:-0.6px">11:47</div>
<div class="a" style="left:1153px;top:417px;font-size:11px;line-height:11px;color:#e0e0e0;white-space:pre;letter-spacing:-0.6px">17:57</div>
<div class="a" style="left:1012px;top:433px;font-size:13px;line-height:13px;color:#e2e2e2;white-space:pre;letter-spacing:-1px">月</div>
<div class="a" style="left:1069px;top:433px;font-size:11px;line-height:11px;color:#e0e0e0;white-space:pre;letter-spacing:-0.6px">10:41</div>
<div class="a" style="left:1112px;top:433px;font-size:11px;line-height:11px;color:#e0e0e0;white-space:pre;letter-spacing:-0.6px">18:26</div>
<div class="a" style="left:1153px;top:433px;font-size:11px;line-height:11px;color:#e0e0e0;white-space:pre;letter-spacing:-0.6px">01:11</div>
<div class="a" style="left:1007px;top:461px;width:184px;height:15px;background:linear-gradient(90deg,#505050,#363636 32%,#383838 55%,#5a5a5a);border:1px solid #0c0c0c"><div class="a" style="left:0;top:1px;width:182px;text-align:center;font-size:12px;line-height:12px;color:#eee">暦･天文現象</div></div>
<div class="a" style="left:1012px;top:484px;font-size:12px;line-height:12px;color:#e6e6e6;white-space:pre;letter-spacing:-0.2px">旧暦 2026年 2月 8日</div>
<div class="a" style="left:1014px;top:497px;font-size:12px;line-height:12px;color:#e6e6e6;white-space:pre;letter-spacing:0px">月齢 7.1</div>
<div class="a" style="left:1014px;top:521px;width:9px;height:9px;background:#d8d8d8"></div>
<div class="a" style="left:1014px;top:545px;width:9px;height:9px;background:#d8d8d8"></div>
<div class="a" style="left:1014px;top:569px;width:9px;height:9px;background:#d8d8d8"></div>
<div class="a" style="left:1025px;top:520px;font-size:12px;line-height:12px;color:#e6e6e6;white-space:pre;letter-spacing:-0.5px">04時18分</div>
<div class="a" style="left:1025px;top:544px;font-size:12px;line-height:12px;color:#e6e6e6;white-space:pre;letter-spacing:-0.5px">19時21分</div>
<div class="a" style="left:1025px;top:568px;font-size:12px;line-height:12px;color:#e6e6e6;white-space:pre;letter-spacing:-0.5px">22時22分</div>
<div class="a" style="left:1021px;top:532px;font-size:13px;line-height:13px;color:#e6e6e6;white-space:pre;letter-spacing:-1px">上弦</div>
<div class="a" style="left:1021px;top:556px;font-size:13px;line-height:13px;color:#e6e6e6;white-space:pre;letter-spacing:-1px">土星が合</div>
<div class="a" style="left:1021px;top:580px;font-size:13px;line-height:13px;color:#e6e6e6;white-space:pre;letter-spacing:-1px">月が木星の北3.4°  通過</div>
<div class="a" style="left:995px;top:851px;width:204px;height:2px;background:#050505"></div>
<div class="a" style="left:995px;top:853px;width:204px;height:20px;background:#0e0e0e"></div>
<svg class="a" style="left:999px;top:856px" width="17" height="15"><path d="M5 2 H16 L12 14 H1Z" fill="#7a90d0"/><path d="M3 12 H13 L12 14 H1Z" fill="#4a60b0"/><rect x="5" y="0" width="10" height="1.5" fill="#9ab"/><path d="M7 5 H11 L8 11" stroke="#111" stroke-width="1.5" fill="none"/></svg>
<div class="a" style="left:1021px;top:858px;font-size:12px;line-height:12px;color:#eee;white-space:pre;font-weight:bold">今日の暦</div>
<div class="a" style="left:995px;top:873px;width:204px;height:3px;background:#555"></div>
<div class="a" style="left:995px;top:876px;width:204px;height:1px;background:#050505"></div>
<div class="a" style="left:995px;top:877px;width:204px;height:19px;background:linear-gradient(90deg,#34457a,#2a3a6a 50%,#1e2848)"></div>
<svg class="a" style="left:999px;top:879px" width="18" height="17"><circle cx="7" cy="7" r="6.5" fill="#a8b8e8"/><path d="M7 0.5 A6.5 6.5 0 0 1 13.5 7 H7Z" fill="#7a8cc8"/><rect x="9" y="9" width="8" height="8" fill="#8898d0" stroke="#2a3a6a"/><g fill="#2a3a6a"><rect x="11" y="11" width="1" height="1"/><rect x="13" y="11" width="1" height="1"/><rect x="15" y="11" width="1" height="1"/><rect x="11" y="13" width="1" height="1"/><rect x="13" y="13" width="1" height="1"/><rect x="15" y="13" width="1" height="1"/></g></svg>
<div class="a" style="left:1021px;top:881px;font-size:12px;line-height:12px;color:#eee;white-space:pre;font-weight:bold">天文現象ガイド</div>
<div class="a" style="left:995px;top:896px;width:204px;height:2px;background:#555"></div>
<!--/RP-->
</body></html>
